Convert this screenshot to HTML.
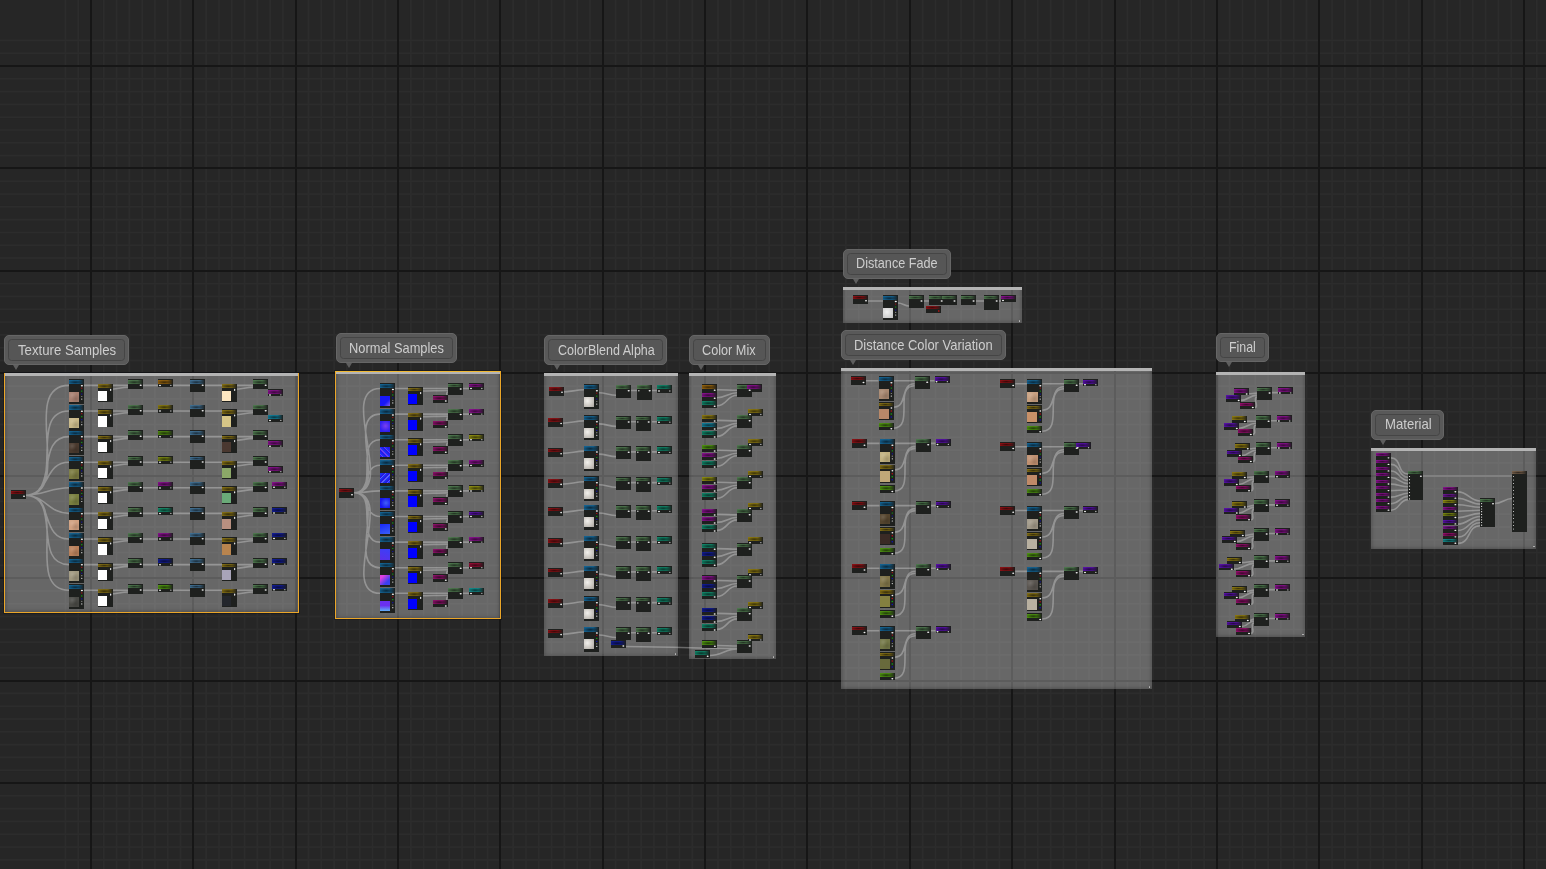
<!DOCTYPE html><html><head><meta charset="utf-8"><style>

*{margin:0;padding:0}
html,body{width:1546px;height:869px;overflow:hidden;background:#262626}
body{position:relative;font-family:"Liberation Sans",sans-serif}
.bo{position:absolute;background:#595959;border:1px solid #666;box-sizing:border-box;border-radius:5px}
.bi{position:absolute;background:#565656;border:1px solid #454545;box-sizing:border-box;border-radius:3.5px}
.bp{position:absolute;width:0;height:0;border-left:3.5px solid transparent;border-right:3.5px solid transparent;border-top:5.5px solid #5e5e5e}
.bt{position:absolute;color:#cdcdcd;filter:grayscale(1);line-height:normal;white-space:nowrap;transform-origin:0 0}
.gb{position:absolute;background:rgba(255,255,255,.3);box-sizing:border-box;box-shadow:inset 0 -3px 3px -1px rgba(0,0,0,.12),inset 3px 0 3px -1px rgba(0,0,0,.12),inset -3px 0 3px -1px rgba(0,0,0,.12)}
.gb b{position:absolute;left:0;top:0;right:0;height:3px;background:#b4b4b4}
.gb s{position:absolute;right:1.5px;bottom:1.5px;width:1.6px;height:1.6px;border-radius:50%;background:#bbb}
.gb.sel s{display:none}
.gb.sel{outline:1px solid rgba(15,18,24,.45);border:1px solid #eba628;border-top:0}
.gb.st{border-top:1px solid #f0b830}
.gb.st b{height:2px}
.n{position:absolute;background:#1e201e;overflow:hidden}
.n i{position:absolute;left:0;top:.5px;right:0;background:linear-gradient(rgba(0,0,0,.15),rgba(0,0,0,.15)),radial-gradient(ellipse 52% 50% at 42% 55%,rgba(0,0,0,.6),rgba(0,0,0,0)),linear-gradient(90deg,var(--c) 0%,var(--c) 60%,#1e201e 100%)}
.n u{position:absolute}
.n .p{background:#f2f2f2;border-radius:50%}

</style></head><body>
<svg width="1546" height="869" style="position:absolute;left:0;top:0"><rect width="1546" height="869" fill="#262626"/><rect x="64.51" y="0" width="1.8" height="869" fill="#2c2c2c"/><rect x="77.31" y="0" width="1.8" height="869" fill="#2c2c2c"/><rect x="102.89" y="0" width="1.8" height="869" fill="#2c2c2c"/><rect x="115.69" y="0" width="1.8" height="869" fill="#2c2c2c"/><rect x="128.48" y="0" width="1.8" height="869" fill="#2c2c2c"/><rect x="141.28" y="0" width="1.8" height="869" fill="#2c2c2c"/><rect x="154.07" y="0" width="1.8" height="869" fill="#2c2c2c"/><rect x="166.87" y="0" width="1.8" height="869" fill="#2c2c2c"/><rect x="179.66" y="0" width="1.8" height="869" fill="#2c2c2c"/><rect x="205.25" y="0" width="1.8" height="869" fill="#2c2c2c"/><rect x="218.05" y="0" width="1.8" height="869" fill="#2c2c2c"/><rect x="230.84" y="0" width="1.8" height="869" fill="#2c2c2c"/><rect x="243.64" y="0" width="1.8" height="869" fill="#2c2c2c"/><rect x="256.43" y="0" width="1.8" height="869" fill="#2c2c2c"/><rect x="269.22" y="0" width="1.8" height="869" fill="#2c2c2c"/><rect x="282.02" y="0" width="1.8" height="869" fill="#2c2c2c"/><rect x="307.61" y="0" width="1.8" height="869" fill="#2c2c2c"/><rect x="320.40" y="0" width="1.8" height="869" fill="#2c2c2c"/><rect x="333.20" y="0" width="1.8" height="869" fill="#2c2c2c"/><rect x="345.99" y="0" width="1.8" height="869" fill="#2c2c2c"/><rect x="358.79" y="0" width="1.8" height="869" fill="#2c2c2c"/><rect x="371.58" y="0" width="1.8" height="869" fill="#2c2c2c"/><rect x="384.38" y="0" width="1.8" height="869" fill="#2c2c2c"/><rect x="409.97" y="0" width="1.8" height="869" fill="#2c2c2c"/><rect x="422.76" y="0" width="1.8" height="869" fill="#2c2c2c"/><rect x="435.55" y="0" width="1.8" height="869" fill="#2c2c2c"/><rect x="448.35" y="0" width="1.8" height="869" fill="#2c2c2c"/><rect x="461.14" y="0" width="1.8" height="869" fill="#2c2c2c"/><rect x="473.94" y="0" width="1.8" height="869" fill="#2c2c2c"/><rect x="486.73" y="0" width="1.8" height="869" fill="#2c2c2c"/><rect x="512.32" y="0" width="1.8" height="869" fill="#2c2c2c"/><rect x="525.12" y="0" width="1.8" height="869" fill="#2c2c2c"/><rect x="537.91" y="0" width="1.8" height="869" fill="#2c2c2c"/><rect x="550.71" y="0" width="1.8" height="869" fill="#2c2c2c"/><rect x="563.50" y="0" width="1.8" height="869" fill="#2c2c2c"/><rect x="576.30" y="0" width="1.8" height="869" fill="#2c2c2c"/><rect x="589.09" y="0" width="1.8" height="869" fill="#2c2c2c"/><rect x="614.68" y="0" width="1.8" height="869" fill="#2c2c2c"/><rect x="627.47" y="0" width="1.8" height="869" fill="#2c2c2c"/><rect x="640.27" y="0" width="1.8" height="869" fill="#2c2c2c"/><rect x="653.06" y="0" width="1.8" height="869" fill="#2c2c2c"/><rect x="665.86" y="0" width="1.8" height="869" fill="#2c2c2c"/><rect x="678.65" y="0" width="1.8" height="869" fill="#2c2c2c"/><rect x="691.45" y="0" width="1.8" height="869" fill="#2c2c2c"/><rect x="717.04" y="0" width="1.8" height="869" fill="#2c2c2c"/><rect x="729.83" y="0" width="1.8" height="869" fill="#2c2c2c"/><rect x="742.63" y="0" width="1.8" height="869" fill="#2c2c2c"/><rect x="755.42" y="0" width="1.8" height="869" fill="#2c2c2c"/><rect x="768.22" y="0" width="1.8" height="869" fill="#2c2c2c"/><rect x="781.01" y="0" width="1.8" height="869" fill="#2c2c2c"/><rect x="793.80" y="0" width="1.8" height="869" fill="#2c2c2c"/><rect x="819.39" y="0" width="1.8" height="869" fill="#2c2c2c"/><rect x="832.19" y="0" width="1.8" height="869" fill="#2c2c2c"/><rect x="844.98" y="0" width="1.8" height="869" fill="#2c2c2c"/><rect x="857.78" y="0" width="1.8" height="869" fill="#2c2c2c"/><rect x="870.57" y="0" width="1.8" height="869" fill="#2c2c2c"/><rect x="883.37" y="0" width="1.8" height="869" fill="#2c2c2c"/><rect x="896.16" y="0" width="1.8" height="869" fill="#2c2c2c"/><rect x="921.75" y="0" width="1.8" height="869" fill="#2c2c2c"/><rect x="934.55" y="0" width="1.8" height="869" fill="#2c2c2c"/><rect x="947.34" y="0" width="1.8" height="869" fill="#2c2c2c"/><rect x="960.13" y="0" width="1.8" height="869" fill="#2c2c2c"/><rect x="972.93" y="0" width="1.8" height="869" fill="#2c2c2c"/><rect x="985.72" y="0" width="1.8" height="869" fill="#2c2c2c"/><rect x="998.52" y="0" width="1.8" height="869" fill="#2c2c2c"/><rect x="1024.11" y="0" width="1.8" height="869" fill="#2c2c2c"/><rect x="1036.90" y="0" width="1.8" height="869" fill="#2c2c2c"/><rect x="1049.70" y="0" width="1.8" height="869" fill="#2c2c2c"/><rect x="1062.49" y="0" width="1.8" height="869" fill="#2c2c2c"/><rect x="1075.29" y="0" width="1.8" height="869" fill="#2c2c2c"/><rect x="1088.08" y="0" width="1.8" height="869" fill="#2c2c2c"/><rect x="1100.88" y="0" width="1.8" height="869" fill="#2c2c2c"/><rect x="1126.46" y="0" width="1.8" height="869" fill="#2c2c2c"/><rect x="1139.26" y="0" width="1.8" height="869" fill="#2c2c2c"/><rect x="1152.05" y="0" width="1.8" height="869" fill="#2c2c2c"/><rect x="1164.85" y="0" width="1.8" height="869" fill="#2c2c2c"/><rect x="1177.64" y="0" width="1.8" height="869" fill="#2c2c2c"/><rect x="1190.44" y="0" width="1.8" height="869" fill="#2c2c2c"/><rect x="1203.23" y="0" width="1.8" height="869" fill="#2c2c2c"/><rect x="1228.82" y="0" width="1.8" height="869" fill="#2c2c2c"/><rect x="1241.62" y="0" width="1.8" height="869" fill="#2c2c2c"/><rect x="1254.41" y="0" width="1.8" height="869" fill="#2c2c2c"/><rect x="1267.21" y="0" width="1.8" height="869" fill="#2c2c2c"/><rect x="1280.00" y="0" width="1.8" height="869" fill="#2c2c2c"/><rect x="1292.79" y="0" width="1.8" height="869" fill="#2c2c2c"/><rect x="1305.59" y="0" width="1.8" height="869" fill="#2c2c2c"/><rect x="1331.18" y="0" width="1.8" height="869" fill="#2c2c2c"/><rect x="1343.97" y="0" width="1.8" height="869" fill="#2c2c2c"/><rect x="1356.77" y="0" width="1.8" height="869" fill="#2c2c2c"/><rect x="1369.56" y="0" width="1.8" height="869" fill="#2c2c2c"/><rect x="1382.36" y="0" width="1.8" height="869" fill="#2c2c2c"/><rect x="1395.15" y="0" width="1.8" height="869" fill="#2c2c2c"/><rect x="1407.95" y="0" width="1.8" height="869" fill="#2c2c2c"/><rect x="1433.54" y="0" width="1.8" height="869" fill="#2c2c2c"/><rect x="1446.33" y="0" width="1.8" height="869" fill="#2c2c2c"/><rect x="1459.12" y="0" width="1.8" height="869" fill="#2c2c2c"/><rect x="1471.92" y="0" width="1.8" height="869" fill="#2c2c2c"/><rect x="1484.71" y="0" width="1.8" height="869" fill="#2c2c2c"/><rect x="1497.51" y="0" width="1.8" height="869" fill="#2c2c2c"/><rect x="1510.30" y="0" width="1.8" height="869" fill="#2c2c2c"/><rect x="1535.89" y="0" width="1.8" height="869" fill="#2c2c2c"/><rect x="0" y="39.49" width="1546" height="1.8" fill="#2c2c2c"/><rect x="0" y="52.30" width="1546" height="1.8" fill="#2c2c2c"/><rect x="0" y="77.90" width="1546" height="1.8" fill="#2c2c2c"/><rect x="0" y="90.71" width="1546" height="1.8" fill="#2c2c2c"/><rect x="0" y="103.51" width="1546" height="1.8" fill="#2c2c2c"/><rect x="0" y="116.31" width="1546" height="1.8" fill="#2c2c2c"/><rect x="0" y="129.12" width="1546" height="1.8" fill="#2c2c2c"/><rect x="0" y="141.92" width="1546" height="1.8" fill="#2c2c2c"/><rect x="0" y="154.73" width="1546" height="1.8" fill="#2c2c2c"/><rect x="0" y="180.33" width="1546" height="1.8" fill="#2c2c2c"/><rect x="0" y="193.14" width="1546" height="1.8" fill="#2c2c2c"/><rect x="0" y="205.94" width="1546" height="1.8" fill="#2c2c2c"/><rect x="0" y="218.75" width="1546" height="1.8" fill="#2c2c2c"/><rect x="0" y="231.55" width="1546" height="1.8" fill="#2c2c2c"/><rect x="0" y="244.35" width="1546" height="1.8" fill="#2c2c2c"/><rect x="0" y="257.16" width="1546" height="1.8" fill="#2c2c2c"/><rect x="0" y="282.76" width="1546" height="1.8" fill="#2c2c2c"/><rect x="0" y="295.57" width="1546" height="1.8" fill="#2c2c2c"/><rect x="0" y="308.37" width="1546" height="1.8" fill="#2c2c2c"/><rect x="0" y="321.18" width="1546" height="1.8" fill="#2c2c2c"/><rect x="0" y="333.98" width="1546" height="1.8" fill="#2c2c2c"/><rect x="0" y="346.78" width="1546" height="1.8" fill="#2c2c2c"/><rect x="0" y="359.59" width="1546" height="1.8" fill="#2c2c2c"/><rect x="0" y="385.19" width="1546" height="1.8" fill="#2c2c2c"/><rect x="0" y="398.00" width="1546" height="1.8" fill="#2c2c2c"/><rect x="0" y="410.80" width="1546" height="1.8" fill="#2c2c2c"/><rect x="0" y="423.61" width="1546" height="1.8" fill="#2c2c2c"/><rect x="0" y="436.41" width="1546" height="1.8" fill="#2c2c2c"/><rect x="0" y="449.21" width="1546" height="1.8" fill="#2c2c2c"/><rect x="0" y="462.02" width="1546" height="1.8" fill="#2c2c2c"/><rect x="0" y="487.62" width="1546" height="1.8" fill="#2c2c2c"/><rect x="0" y="500.43" width="1546" height="1.8" fill="#2c2c2c"/><rect x="0" y="513.23" width="1546" height="1.8" fill="#2c2c2c"/><rect x="0" y="526.04" width="1546" height="1.8" fill="#2c2c2c"/><rect x="0" y="538.84" width="1546" height="1.8" fill="#2c2c2c"/><rect x="0" y="551.64" width="1546" height="1.8" fill="#2c2c2c"/><rect x="0" y="564.45" width="1546" height="1.8" fill="#2c2c2c"/><rect x="0" y="590.05" width="1546" height="1.8" fill="#2c2c2c"/><rect x="0" y="602.86" width="1546" height="1.8" fill="#2c2c2c"/><rect x="0" y="615.66" width="1546" height="1.8" fill="#2c2c2c"/><rect x="0" y="628.47" width="1546" height="1.8" fill="#2c2c2c"/><rect x="0" y="641.27" width="1546" height="1.8" fill="#2c2c2c"/><rect x="0" y="654.07" width="1546" height="1.8" fill="#2c2c2c"/><rect x="0" y="666.88" width="1546" height="1.8" fill="#2c2c2c"/><rect x="0" y="692.48" width="1546" height="1.8" fill="#2c2c2c"/><rect x="0" y="705.29" width="1546" height="1.8" fill="#2c2c2c"/><rect x="0" y="718.09" width="1546" height="1.8" fill="#2c2c2c"/><rect x="0" y="730.90" width="1546" height="1.8" fill="#2c2c2c"/><rect x="0" y="743.70" width="1546" height="1.8" fill="#2c2c2c"/><rect x="0" y="756.50" width="1546" height="1.8" fill="#2c2c2c"/><rect x="0" y="769.31" width="1546" height="1.8" fill="#2c2c2c"/><rect x="0" y="794.91" width="1546" height="1.8" fill="#2c2c2c"/><rect x="0" y="807.72" width="1546" height="1.8" fill="#2c2c2c"/><rect x="0" y="820.52" width="1546" height="1.8" fill="#2c2c2c"/><rect x="0" y="833.33" width="1546" height="1.8" fill="#2c2c2c"/><rect x="0" y="846.13" width="1546" height="1.8" fill="#2c2c2c"/><rect x="0" y="858.93" width="1546" height="1.8" fill="#2c2c2c"/><rect x="90" y="0" width="2" height="869" fill="#161616"/><rect x="192" y="0" width="2" height="869" fill="#161616"/><rect x="295" y="0" width="2" height="869" fill="#161616"/><rect x="397" y="0" width="2" height="869" fill="#161616"/><rect x="499" y="0" width="2" height="869" fill="#161616"/><rect x="602" y="0" width="2" height="869" fill="#161616"/><rect x="704" y="0" width="2" height="869" fill="#161616"/><rect x="806" y="0" width="2" height="869" fill="#161616"/><rect x="909" y="0" width="2" height="869" fill="#161616"/><rect x="1011" y="0" width="2" height="869" fill="#161616"/><rect x="1114" y="0" width="2" height="869" fill="#161616"/><rect x="1216" y="0" width="2" height="869" fill="#161616"/><rect x="1318" y="0" width="2" height="869" fill="#161616"/><rect x="1421" y="0" width="2" height="869" fill="#161616"/><rect x="1523" y="0" width="2" height="869" fill="#161616"/><rect x="0" y="65" width="1546" height="2" fill="#161616"/><rect x="0" y="167" width="1546" height="2" fill="#161616"/><rect x="0" y="270" width="1546" height="2" fill="#161616"/><rect x="0" y="372" width="1546" height="2" fill="#161616"/><rect x="0" y="475" width="1546" height="2" fill="#161616"/><rect x="0" y="577" width="1546" height="2" fill="#161616"/><rect x="0" y="680" width="1546" height="2" fill="#161616"/><rect x="0" y="782" width="1546" height="2" fill="#161616"/></svg>
<div class="bo" style="left:4.0px;top:335.0px;width:125.0px;height:30.0px"></div>
<div class="bi" style="left:8.0px;top:339.0px;width:117.0px;height:22.0px"></div>
<div class="bp" style="left:13.0px;top:365.0px"></div>
<div class="bt" style="left:18.00px;top:341.54px;font-size:14.1px;transform:scaleX(0.9353)">Texture Samples</div>
<div class="gb sel" style="left:4.0px;top:373.0px;width:295.0px;height:240.0px"><b></b><s></s></div>
<div class="bo" style="left:336.0px;top:333.0px;width:121.0px;height:30.0px"></div>
<div class="bi" style="left:340.0px;top:337.0px;width:113.0px;height:22.0px"></div>
<div class="bp" style="left:345.5px;top:363.0px"></div>
<div class="bt" style="left:349.00px;top:339.54px;font-size:14.1px;transform:scaleX(0.9111)">Normal Samples</div>
<div class="gb sel st" style="left:335.0px;top:371.0px;width:166.0px;height:248.0px"><b></b><s></s></div>
<div class="bo" style="left:544.2px;top:335.3px;width:122.4px;height:29.5px"></div>
<div class="bi" style="left:548.2px;top:339.3px;width:114.4px;height:21.5px"></div>
<div class="bp" style="left:553.6px;top:364.8px"></div>
<div class="bt" style="left:557.50px;top:341.74px;font-size:14.1px;transform:scaleX(0.8887)">ColorBlend Alpha</div>
<div class="gb" style="left:544.2px;top:373.0px;width:133.8px;height:283.0px"><b></b><s></s></div>
<div class="bo" style="left:689.1px;top:335.3px;width:80.6px;height:29.5px"></div>
<div class="bi" style="left:693.1px;top:339.3px;width:72.6px;height:21.5px"></div>
<div class="bp" style="left:698.0px;top:364.8px"></div>
<div class="bt" style="left:702.30px;top:341.74px;font-size:14.1px;transform:scaleX(0.8998)">Color Mix</div>
<div class="gb" style="left:689.3px;top:373.0px;width:86.7px;height:286.0px"><b></b><s></s></div>
<div class="bo" style="left:843.1px;top:249.2px;width:107.6px;height:29.5px"></div>
<div class="bi" style="left:847.1px;top:253.2px;width:99.6px;height:21.5px"></div>
<div class="bp" style="left:852.7px;top:278.7px"></div>
<div class="bt" style="left:856.40px;top:255.44px;font-size:14.1px;transform:scaleX(0.8986)">Distance Fade</div>
<div class="gb" style="left:843.1px;top:287.0px;width:178.9px;height:36.0px"><b></b><s></s></div>
<div class="bo" style="left:841.1px;top:330.2px;width:164.7px;height:29.8px"></div>
<div class="bi" style="left:845.1px;top:334.2px;width:156.7px;height:21.8px"></div>
<div class="bp" style="left:850.3px;top:360.0px"></div>
<div class="bt" style="left:854.30px;top:336.54px;font-size:14.1px;transform:scaleX(0.9187)">Distance Color Variation</div>
<div class="gb" style="left:841.3px;top:368.2px;width:310.7px;height:321.3px"><b></b><s></s></div>
<div class="bo" style="left:1216.4px;top:333.2px;width:52.2px;height:29.2px"></div>
<div class="bi" style="left:1220.4px;top:337.2px;width:44.2px;height:21.2px"></div>
<div class="bp" style="left:1225.9px;top:362.4px"></div>
<div class="bt" style="left:1229.30px;top:339.44px;font-size:14.1px;transform:scaleX(0.8790)">Final</div>
<div class="gb" style="left:1216.0px;top:371.5px;width:89.1px;height:265.2px"><b></b><s></s></div>
<div class="bo" style="left:1371.4px;top:410.1px;width:72.6px;height:29.5px"></div>
<div class="bi" style="left:1375.4px;top:414.1px;width:64.6px;height:21.5px"></div>
<div class="bp" style="left:1380.3px;top:439.6px"></div>
<div class="bt" style="left:1384.50px;top:416.34px;font-size:14.1px;transform:scaleX(0.9327)">Material</div>
<div class="gb" style="left:1371.0px;top:448.3px;width:165.4px;height:100.5px"><b></b><s></s></div>
<svg width="1546" height="869" style="position:absolute;left:0;top:0"><path d="M25.0 495.3C76.3 495.3 17.7 385.4 69.0 385.4 M83.0 385.4C98.0 385.4 113.0 385.4 128.0 385.4 M110.0 389.2C116.7 389.2 121.3 387.2 128.0 387.2 M143.0 385.4C148.0 385.4 153.0 385.4 158.0 385.4 M173.0 385.4C178.7 385.4 184.3 385.4 190.0 385.4 M205.0 385.4C215.7 385.4 226.3 385.4 237.0 385.4 M235.0 389.2C241.7 389.2 246.3 387.2 253.0 387.2 M205.0 385.4C221.0 385.4 237.0 385.4 253.0 385.4 M25.0 495.3C67.8 495.3 26.2 411.0 69.0 411.0 M83.0 411.0C98.0 411.0 113.0 411.0 128.0 411.0 M110.0 414.8C116.7 414.8 121.3 412.8 128.0 412.8 M143.0 411.0C148.0 411.0 153.0 411.0 158.0 411.0 M173.0 411.0C178.7 411.0 184.3 411.0 190.0 411.0 M205.0 411.0C215.7 411.0 226.3 411.0 237.0 411.0 M235.0 414.8C241.7 414.8 246.3 412.8 253.0 412.8 M205.0 411.0C221.0 411.0 237.0 411.0 253.0 411.0 M25.0 495.3C59.2 495.3 34.8 436.6 69.0 436.6 M83.0 436.6C98.0 436.6 113.0 436.6 128.0 436.6 M110.0 440.4C116.7 440.4 121.3 438.4 128.0 438.4 M143.0 436.6C148.0 436.6 153.0 436.6 158.0 436.6 M173.0 436.6C178.7 436.6 184.3 436.6 190.0 436.6 M205.0 436.6C215.7 436.6 226.3 436.6 237.0 436.6 M235.0 440.4C241.7 440.4 246.3 438.4 253.0 438.4 M205.0 436.6C221.0 436.6 237.0 436.6 253.0 436.6 M25.0 495.3C50.7 495.3 43.3 462.2 69.0 462.2 M83.0 462.2C98.0 462.2 113.0 462.2 128.0 462.2 M110.0 466.0C116.7 466.0 121.3 464.0 128.0 464.0 M143.0 462.2C148.0 462.2 153.0 462.2 158.0 462.2 M173.0 462.2C178.7 462.2 184.3 462.2 190.0 462.2 M205.0 462.2C215.7 462.2 226.3 462.2 237.0 462.2 M235.0 466.0C241.7 466.0 246.3 464.0 253.0 464.0 M205.0 462.2C221.0 462.2 237.0 462.2 253.0 462.2 M25.0 495.3C42.2 495.3 51.8 487.8 69.0 487.8 M83.0 487.8C98.0 487.8 113.0 487.8 128.0 487.8 M110.0 491.6C116.7 491.6 121.3 489.6 128.0 489.6 M143.0 487.8C148.0 487.8 153.0 487.8 158.0 487.8 M173.0 487.8C178.7 487.8 184.3 487.8 190.0 487.8 M205.0 487.8C215.7 487.8 226.3 487.8 237.0 487.8 M235.0 491.6C241.7 491.6 246.3 489.6 253.0 489.6 M205.0 487.8C221.0 487.8 237.0 487.8 253.0 487.8 M25.0 495.3C45.7 495.3 48.3 513.4 69.0 513.4 M83.0 513.4C98.0 513.4 113.0 513.4 128.0 513.4 M110.0 517.2C116.7 517.2 121.3 515.2 128.0 515.2 M143.0 513.4C148.0 513.4 153.0 513.4 158.0 513.4 M173.0 513.4C178.7 513.4 184.3 513.4 190.0 513.4 M205.0 513.4C215.7 513.4 226.3 513.4 237.0 513.4 M235.0 517.2C241.7 517.2 246.3 515.2 253.0 515.2 M205.0 513.4C221.0 513.4 237.0 513.4 253.0 513.4 M25.0 495.3C54.2 495.3 39.8 539.0 69.0 539.0 M83.0 539.0C98.0 539.0 113.0 539.0 128.0 539.0 M110.0 542.8C116.7 542.8 121.3 540.8 128.0 540.8 M143.0 539.0C148.0 539.0 153.0 539.0 158.0 539.0 M173.0 539.0C178.7 539.0 184.3 539.0 190.0 539.0 M205.0 539.0C215.7 539.0 226.3 539.0 237.0 539.0 M235.0 542.8C241.7 542.8 246.3 540.8 253.0 540.8 M205.0 539.0C221.0 539.0 237.0 539.0 253.0 539.0 M25.0 495.3C62.8 495.3 31.2 564.6 69.0 564.6 M83.0 564.6C98.0 564.6 113.0 564.6 128.0 564.6 M110.0 568.4C116.7 568.4 121.3 566.4 128.0 566.4 M143.0 564.6C148.0 564.6 153.0 564.6 158.0 564.6 M173.0 564.6C178.7 564.6 184.3 564.6 190.0 564.6 M205.0 564.6C215.7 564.6 226.3 564.6 237.0 564.6 M235.0 568.4C241.7 568.4 246.3 566.4 253.0 566.4 M205.0 564.6C221.0 564.6 237.0 564.6 253.0 564.6 M25.0 495.3C71.3 495.3 22.7 590.2 69.0 590.2 M83.0 590.2C98.0 590.2 113.0 590.2 128.0 590.2 M110.0 594.0C116.7 594.0 121.3 592.0 128.0 592.0 M143.0 590.2C148.0 590.2 153.0 590.2 158.0 590.2 M173.0 590.2C178.7 590.2 184.3 590.2 190.0 590.2 M205.0 590.2C215.7 590.2 226.3 590.2 237.0 590.2 M235.0 594.0C241.7 594.0 246.3 592.0 253.0 592.0 M205.0 590.2C221.0 590.2 237.0 590.2 253.0 590.2 M354.0 492.8C397.4 492.8 336.6 388.5 380.0 388.5 M395.0 388.5C412.7 388.5 430.3 388.5 448.0 388.5 M420.0 391.0C429.5 391.0 438.5 390.5 448.0 390.5 M446.0 400.0C449.3 400.0 444.7 392.0 448.0 392.0 M463.0 388.5C465.0 388.5 467.0 388.5 469.0 388.5 M354.0 492.8C388.9 492.8 345.1 414.1 380.0 414.1 M395.0 414.1C412.7 414.1 430.3 414.1 448.0 414.1 M420.0 416.6C429.5 416.6 438.5 416.1 448.0 416.1 M446.0 425.6C449.3 425.6 444.7 417.6 448.0 417.6 M463.0 414.1C465.0 414.1 467.0 414.1 469.0 414.1 M354.0 492.8C380.4 492.8 353.6 439.7 380.0 439.7 M395.0 439.7C412.7 439.7 430.3 439.7 448.0 439.7 M420.0 442.2C429.5 442.2 438.5 441.7 448.0 441.7 M446.0 451.2C449.3 451.2 444.7 443.2 448.0 443.2 M463.0 439.7C465.0 439.7 467.0 439.7 469.0 439.7 M354.0 492.8C371.8 492.8 362.2 465.3 380.0 465.3 M395.0 465.3C412.7 465.3 430.3 465.3 448.0 465.3 M420.0 467.8C429.5 467.8 438.5 467.3 448.0 467.3 M446.0 476.8C449.3 476.8 444.7 468.8 448.0 468.8 M463.0 465.3C465.0 465.3 467.0 465.3 469.0 465.3 M354.0 492.8C363.3 492.8 370.7 490.9 380.0 490.9 M395.0 490.9C412.7 490.9 430.3 490.9 448.0 490.9 M420.0 493.4C429.5 493.4 438.5 492.9 448.0 492.9 M446.0 502.4C449.3 502.4 444.7 494.4 448.0 494.4 M463.0 490.9C465.0 490.9 467.0 490.9 469.0 490.9 M354.0 492.8C370.6 492.8 363.4 516.5 380.0 516.5 M395.0 516.5C412.7 516.5 430.3 516.5 448.0 516.5 M420.0 519.0C429.5 519.0 438.5 518.5 448.0 518.5 M446.0 528.0C449.3 528.0 444.7 520.0 448.0 520.0 M463.0 516.5C465.0 516.5 467.0 516.5 469.0 516.5 M354.0 492.8C379.1 492.8 354.9 542.1 380.0 542.1 M395.0 542.1C412.7 542.1 430.3 542.1 448.0 542.1 M420.0 544.6C429.5 544.6 438.5 544.1 448.0 544.1 M446.0 553.6C449.3 553.6 444.7 545.6 448.0 545.6 M463.0 542.1C465.0 542.1 467.0 542.1 469.0 542.1 M354.0 492.8C387.6 492.8 346.4 567.7 380.0 567.7 M395.0 567.7C412.7 567.7 430.3 567.7 448.0 567.7 M420.0 570.2C429.5 570.2 438.5 569.7 448.0 569.7 M446.0 579.2C449.3 579.2 444.7 571.2 448.0 571.2 M463.0 567.7C465.0 567.7 467.0 567.7 469.0 567.7 M354.0 492.8C396.2 492.8 337.8 593.3 380.0 593.3 M395.0 593.3C412.7 593.3 430.3 593.3 448.0 593.3 M420.0 595.8C429.5 595.8 438.5 595.3 448.0 595.3 M446.0 604.8C449.3 604.8 444.7 596.8 448.0 596.8 M463.0 593.3C465.0 593.3 467.0 593.3 469.0 593.3 M562.5 392.0C570.4 392.0 576.1 389.7 584.0 389.7 M599.0 392.7C605.5 392.7 609.5 395.2 616.0 395.2 M631.0 390.5C633.0 390.5 635.0 390.5 637.0 390.5 M652.0 390.5C654.0 390.5 655.0 390.5 657.0 390.5 M562.5 423.2C570.4 423.2 576.1 420.9 584.0 420.9 M599.0 423.9C605.5 423.9 609.5 426.4 616.0 426.4 M631.0 421.7C633.0 421.7 635.0 421.7 637.0 421.7 M652.0 421.7C654.0 421.7 655.0 421.7 657.0 421.7 M562.5 453.4C570.4 453.4 576.1 451.1 584.0 451.1 M599.0 454.1C605.5 454.1 609.5 456.6 616.0 456.6 M631.0 451.9C633.0 451.9 635.0 451.9 637.0 451.9 M652.0 451.9C654.0 451.9 655.0 451.9 657.0 451.9 M562.5 484.1C570.4 484.1 576.1 481.8 584.0 481.8 M599.0 484.8C605.5 484.8 609.5 487.3 616.0 487.3 M631.0 482.6C633.0 482.6 635.0 482.6 637.0 482.6 M652.0 482.6C654.0 482.6 655.0 482.6 657.0 482.6 M562.5 512.3C570.4 512.3 576.1 510.0 584.0 510.0 M599.0 513.0C605.5 513.0 609.5 515.5 616.0 515.5 M631.0 510.8C633.0 510.8 635.0 510.8 637.0 510.8 M652.0 510.8C654.0 510.8 655.0 510.8 657.0 510.8 M562.5 543.5C570.4 543.5 576.1 541.2 584.0 541.2 M599.0 544.2C605.5 544.2 609.5 546.7 616.0 546.7 M631.0 542.0C633.0 542.0 635.0 542.0 637.0 542.0 M652.0 542.0C654.0 542.0 655.0 542.0 657.0 542.0 M562.5 573.4C570.4 573.4 576.1 571.1 584.0 571.1 M599.0 574.1C605.5 574.1 609.5 576.6 616.0 576.6 M631.0 571.9C633.0 571.9 635.0 571.9 637.0 571.9 M652.0 571.9C654.0 571.9 655.0 571.9 657.0 571.9 M562.5 604.1C570.4 604.1 576.1 601.8 584.0 601.8 M599.0 604.8C605.5 604.8 609.5 607.3 616.0 607.3 M631.0 602.6C633.0 602.6 635.0 602.6 637.0 602.6 M652.0 602.6C654.0 602.6 655.0 602.6 657.0 602.6 M562.5 634.3C570.4 634.3 576.1 632.0 584.0 632.0 M599.0 635.0C605.5 635.0 609.5 637.5 616.0 637.5 M631.0 632.8C633.0 632.8 635.0 632.8 637.0 632.8 M652.0 632.8C654.0 632.8 655.0 632.8 657.0 632.8 M625.6 646.5C663.4 646.5 699.2 648.5 737.0 648.5 M717.0 389.7C723.8 389.7 730.2 390.2 737.0 390.2 M717.0 397.7C725.3 397.7 728.7 392.7 737.0 392.7 M717.0 405.7C727.2 405.7 726.8 395.2 737.0 395.2 M717.0 420.4C723.8 420.4 730.2 420.9 737.0 420.9 M717.0 428.4C725.3 428.4 728.7 423.4 737.0 423.4 M717.0 436.4C727.2 436.4 726.8 425.9 737.0 425.9 M717.0 450.3C723.8 450.3 730.2 450.8 737.0 450.8 M717.0 458.3C725.3 458.3 728.7 453.3 737.0 453.3 M717.0 466.3C727.2 466.3 726.8 455.8 737.0 455.8 M717.0 482.3C723.8 482.3 730.2 482.8 737.0 482.8 M717.0 490.3C725.3 490.3 728.7 485.3 737.0 485.3 M717.0 498.3C727.2 498.3 726.8 487.8 737.0 487.8 M717.0 514.4C723.8 514.4 730.2 514.9 737.0 514.9 M717.0 522.4C725.3 522.4 728.7 517.4 737.0 517.4 M717.0 530.4C727.2 530.4 726.8 519.9 737.0 519.9 M717.0 548.6C723.8 548.6 730.2 549.1 737.0 549.1 M717.0 556.6C725.3 556.6 728.7 551.6 737.0 551.6 M717.0 564.6C727.2 564.6 726.8 554.1 737.0 554.1 M717.0 580.5C723.8 580.5 730.2 581.0 737.0 581.0 M717.0 588.5C725.3 588.5 728.7 583.5 737.0 583.5 M717.0 596.5C727.2 596.5 726.8 586.0 737.0 586.0 M717.0 613.4C723.8 613.4 730.2 613.9 737.0 613.9 M717.0 621.4C725.3 621.4 728.7 616.4 737.0 616.4 M717.0 629.4C727.2 629.4 726.8 618.9 737.0 618.9 M717.0 645.5C723.8 645.5 730.2 646.0 737.0 646.0 M710.0 655.5C721.2 655.5 725.8 649.0 737.0 649.0 M868.0 301.0C873.0 301.0 878.0 301.0 883.0 301.0 M898.0 303.0C902.7 303.0 904.3 306.0 909.0 306.0 M924.0 301.0C926.0 301.0 927.0 301.0 929.0 301.0 M976.0 301.0C978.7 301.0 981.3 301.0 984.0 301.0 M999.0 301.0C1001.0 301.0 999.0 301.0 1001.0 301.0 M865.5 380.7C869.8 380.7 874.2 380.7 878.5 380.7 M893.5 380.7C900.5 380.7 907.5 380.7 914.5 380.7 M893.5 407.2C908.3 407.2 899.7 383.7 914.5 383.7 M893.5 428.2C914.7 428.2 893.3 385.7 914.5 385.7 M929.5 380.7C931.5 380.7 932.5 380.7 934.5 380.7 M866.5 443.4C870.8 443.4 875.2 443.4 879.5 443.4 M894.5 443.4C901.5 443.4 908.5 443.4 915.5 443.4 M894.5 469.9C909.3 469.9 900.7 446.4 915.5 446.4 M894.5 490.9C915.7 490.9 894.3 448.4 915.5 448.4 M930.5 443.4C932.5 443.4 933.5 443.4 935.5 443.4 M866.5 505.6C870.8 505.6 875.2 505.6 879.5 505.6 M894.5 505.6C901.5 505.6 908.5 505.6 915.5 505.6 M894.5 532.1C909.3 532.1 900.7 508.6 915.5 508.6 M894.5 553.1C915.7 553.1 894.3 510.6 915.5 510.6 M930.5 505.6C932.5 505.6 933.5 505.6 935.5 505.6 M866.5 568.2C870.8 568.2 875.2 568.2 879.5 568.2 M894.5 568.2C901.5 568.2 908.5 568.2 915.5 568.2 M894.5 594.7C909.3 594.7 900.7 571.2 915.5 571.2 M894.5 615.7C915.7 615.7 894.3 573.2 915.5 573.2 M930.5 568.2C932.5 568.2 933.5 568.2 935.5 568.2 M866.5 630.7C870.8 630.7 875.2 630.7 879.5 630.7 M894.5 630.7C901.5 630.7 908.5 630.7 915.5 630.7 M894.5 657.2C909.3 657.2 900.7 633.7 915.5 633.7 M894.5 678.2C915.7 678.2 894.3 635.7 915.5 635.7 M930.5 630.7C932.5 630.7 933.5 630.7 935.5 630.7 M1015.2 383.7C1019.3 383.7 1023.3 383.7 1027.4 383.7 M1042.4 383.7C1049.6 383.7 1056.8 383.7 1064.0 383.7 M1042.4 410.2C1057.4 410.2 1049.0 386.7 1064.0 386.7 M1042.4 431.2C1063.8 431.2 1042.6 388.7 1064.0 388.7 M1079.0 383.7C1081.0 383.7 1081.0 383.7 1083.0 383.7 M1015.2 446.7C1019.3 446.7 1023.3 446.7 1027.4 446.7 M1042.4 446.7C1049.6 446.7 1056.8 446.7 1064.0 446.7 M1042.4 473.2C1057.4 473.2 1049.0 449.7 1064.0 449.7 M1042.4 494.2C1063.8 494.2 1042.6 451.7 1064.0 451.7 M1079.0 446.7C1081.0 446.7 1073.7 446.7 1075.7 446.7 M1015.2 510.5C1019.3 510.5 1023.3 510.5 1027.4 510.5 M1042.4 510.5C1049.6 510.5 1056.8 510.5 1064.0 510.5 M1042.4 537.0C1057.4 537.0 1049.0 513.5 1064.0 513.5 M1042.4 558.0C1063.8 558.0 1042.6 515.5 1064.0 515.5 M1079.0 510.5C1081.0 510.5 1081.0 510.5 1083.0 510.5 M1015.2 571.4C1019.3 571.4 1023.3 571.4 1027.4 571.4 M1042.4 571.4C1049.6 571.4 1056.8 571.4 1064.0 571.4 M1042.4 597.9C1057.4 597.9 1049.0 574.4 1064.0 574.4 M1042.4 618.9C1063.8 618.9 1042.6 576.4 1064.0 576.4 M1079.0 571.4C1081.0 571.4 1081.0 571.4 1083.0 571.4 M1248.9 393.8C1251.8 393.8 1254.0 393.1 1256.9 393.1 M1240.9 400.4C1248.0 400.4 1249.8 395.1 1256.9 395.1 M1255.0 407.5C1259.1 407.5 1252.8 397.1 1256.9 397.1 M1271.9 392.6C1273.9 392.6 1275.9 392.6 1277.9 392.6 M1247.0 421.3C1250.0 421.3 1252.9 421.2 1255.9 421.2 M1239.0 428.3C1246.3 428.3 1248.6 423.2 1255.9 423.2 M1253.0 434.4C1257.0 434.4 1251.9 425.2 1255.9 425.2 M1270.9 420.7C1272.9 420.7 1274.9 420.7 1276.9 420.7 M1250.0 448.7C1252.1 448.7 1253.8 448.2 1255.9 448.2 M1242.0 455.5C1248.4 455.5 1249.5 450.2 1255.9 450.2 M1253.0 461.5C1257.1 461.5 1251.8 452.2 1255.9 452.2 M1270.9 447.7C1272.9 447.7 1274.9 447.7 1276.9 447.7 M1247.0 477.3C1249.5 477.3 1251.5 476.9 1254.0 476.9 M1239.0 484.4C1245.8 484.4 1247.2 478.9 1254.0 478.9 M1251.2 490.6C1255.4 490.6 1249.8 480.9 1254.0 480.9 M1269.0 476.4C1271.0 476.4 1273.0 476.4 1275.0 476.4 M1247.0 506.8C1249.8 506.8 1251.2 505.4 1254.0 505.4 M1239.0 513.0C1245.9 513.0 1247.1 507.4 1254.0 507.4 M1251.2 519.7C1255.6 519.7 1249.6 509.4 1254.0 509.4 M1269.0 504.9C1271.0 504.9 1273.0 504.9 1275.0 504.9 M1245.0 535.5C1248.5 535.5 1250.5 534.0 1254.0 534.0 M1237.0 541.5C1244.5 541.5 1246.5 536.0 1254.0 536.0 M1251.2 548.5C1255.6 548.5 1249.6 538.0 1254.0 538.0 M1269.0 533.5C1271.0 533.5 1273.0 533.5 1275.0 533.5 M1242.0 562.5C1246.4 562.5 1249.6 561.4 1254.0 561.4 M1234.0 569.1C1242.6 569.1 1245.4 563.4 1254.0 563.4 M1251.2 575.7C1255.6 575.7 1249.6 565.4 1254.0 565.4 M1269.0 560.9C1271.0 560.9 1273.0 560.9 1275.0 560.9 M1247.0 591.5C1249.8 591.5 1251.2 590.1 1254.0 590.1 M1239.0 597.5C1245.8 597.5 1247.2 592.1 1254.0 592.1 M1251.2 604.2C1255.5 604.2 1249.7 594.1 1254.0 594.1 M1269.0 589.6C1271.0 589.6 1273.0 589.6 1275.0 589.6 M1250.0 620.4C1252.0 620.4 1252.0 619.0 1254.0 619.0 M1242.0 626.5C1247.8 626.5 1248.2 621.0 1254.0 621.0 M1251.2 633.3C1255.6 633.3 1249.6 623.0 1254.0 623.0 M1269.0 618.5C1271.0 618.5 1273.0 618.5 1275.0 618.5 M1391.0 457.9C1402.0 457.9 1397.0 474.0 1408.0 474.0 M1391.0 464.4C1400.9 464.4 1398.1 477.2 1408.0 477.2 M1391.0 471.0C1399.8 471.0 1399.2 480.4 1408.0 480.4 M1391.0 477.5C1398.7 477.5 1400.3 483.6 1408.0 483.6 M1391.0 484.1C1397.6 484.1 1401.4 486.8 1408.0 486.8 M1391.0 490.6C1396.9 490.6 1402.1 490.0 1408.0 490.0 M1391.0 497.1C1398.0 497.1 1401.0 493.2 1408.0 493.2 M1391.0 503.7C1399.1 503.7 1399.9 496.4 1408.0 496.4 M1391.0 510.2C1400.2 510.2 1398.8 499.6 1408.0 499.6 M1458.0 491.9C1468.4 491.9 1469.6 501.0 1480.0 501.0 M1458.0 498.3C1467.3 498.3 1470.7 504.1 1480.0 504.1 M1458.0 504.8C1466.1 504.8 1471.9 507.2 1480.0 507.2 M1458.0 511.2C1465.6 511.2 1472.4 510.3 1480.0 510.3 M1458.0 517.7C1466.8 517.7 1471.2 513.4 1480.0 513.4 M1458.0 524.1C1467.9 524.1 1470.1 516.5 1480.0 516.5 M1458.0 530.5C1469.0 530.5 1469.0 519.6 1480.0 519.6 M1458.0 537.0C1470.1 537.0 1467.9 522.7 1480.0 522.7 M1458.0 543.4C1471.2 543.4 1466.8 525.8 1480.0 525.8 M1423.0 476.0C1452.7 476.0 1482.3 476.0 1512.0 476.0 M1495.0 503.5C1502.3 503.5 1504.7 498.5 1512.0 498.5" fill="none" stroke="rgba(235,235,235,.34)" stroke-width="1.6"/></svg>
<div class="n" style="left:69.0px;top:379.2px;width:15.0px;height:25.0px"><i style="height:4.5px;--c:#1872a8"></i><u style="left:0.0px;top:12.8px;width:10.2px;height:10.2px;background:radial-gradient(circle at 30% 30%,rgba(255,255,255,.14),rgba(255,255,255,0) 45%),radial-gradient(circle at 70% 70%,rgba(0,0,0,.16),rgba(0,0,0,0) 50%),#a88070"></u></div>
<div class="n" style="left:98.0px;top:383.8px;width:15.0px;height:18.0px"><i style="height:3.9px;--c:#988018"></i><u style="left:0.0px;top:7.0px;width:9.2px;height:10.2px;background:#ffffff"></u></div>
<div class="n" style="left:128.0px;top:379.2px;width:15.0px;height:10.0px"><i style="height:3.9px;--c:#5a8a5a"></i></div>
<div class="n" style="left:158.0px;top:379.2px;width:15.0px;height:8.0px"><i style="height:4.1px;--c:#a87010"></i></div>
<div class="n" style="left:190.0px;top:379.2px;width:15.0px;height:12.5px"><i style="height:3.9px;--c:#4a80a8"></i></div>
<div class="n" style="left:222.0px;top:383.8px;width:15.0px;height:18.0px"><i style="height:3.9px;--c:#988018"></i><u style="left:0.0px;top:7.0px;width:9.2px;height:10.2px;background:#fde7c2"></u></div>
<div class="n" style="left:253.0px;top:379.2px;width:15.0px;height:10.0px"><i style="height:3.9px;--c:#5a8a5a"></i></div>
<div class="n" style="left:268.0px;top:389.2px;width:15.0px;height:7.0px"><i style="height:4.0px;--c:#9a14a0"></i></div>
<div class="n" style="left:69.0px;top:404.8px;width:15.0px;height:25.0px"><i style="height:4.5px;--c:#1872a8"></i><u style="left:0.0px;top:12.8px;width:10.2px;height:10.2px;background:radial-gradient(circle at 30% 30%,rgba(255,255,255,.14),rgba(255,255,255,0) 45%),radial-gradient(circle at 70% 70%,rgba(0,0,0,.16),rgba(0,0,0,0) 50%),#c8b888"></u></div>
<div class="n" style="left:98.0px;top:409.4px;width:15.0px;height:18.0px"><i style="height:3.9px;--c:#988018"></i><u style="left:0.0px;top:7.0px;width:9.2px;height:10.2px;background:#ffffff"></u></div>
<div class="n" style="left:128.0px;top:404.8px;width:15.0px;height:10.0px"><i style="height:3.9px;--c:#5a8a5a"></i></div>
<div class="n" style="left:158.0px;top:404.8px;width:15.0px;height:8.0px"><i style="height:4.1px;--c:#9a8a14"></i></div>
<div class="n" style="left:190.0px;top:404.8px;width:15.0px;height:12.5px"><i style="height:3.9px;--c:#4a80a8"></i></div>
<div class="n" style="left:222.0px;top:409.4px;width:15.0px;height:18.0px"><i style="height:3.9px;--c:#988018"></i><u style="left:0.0px;top:7.0px;width:9.2px;height:10.2px;background:#d6c587"></u></div>
<div class="n" style="left:253.0px;top:404.8px;width:15.0px;height:10.0px"><i style="height:3.9px;--c:#5a8a5a"></i></div>
<div class="n" style="left:268.0px;top:414.8px;width:15.0px;height:7.0px"><i style="height:4.0px;--c:#1490b0"></i></div>
<div class="n" style="left:69.0px;top:430.4px;width:15.0px;height:25.0px"><i style="height:4.5px;--c:#1872a8"></i><u style="left:0.0px;top:12.8px;width:10.2px;height:10.2px;background:radial-gradient(circle at 30% 30%,rgba(255,255,255,.14),rgba(255,255,255,0) 45%),radial-gradient(circle at 70% 70%,rgba(0,0,0,.16),rgba(0,0,0,0) 50%),#4a3a2e"></u></div>
<div class="n" style="left:98.0px;top:435.0px;width:15.0px;height:18.0px"><i style="height:3.9px;--c:#988018"></i><u style="left:0.0px;top:7.0px;width:9.2px;height:10.2px;background:#ffffff"></u></div>
<div class="n" style="left:128.0px;top:430.4px;width:15.0px;height:10.0px"><i style="height:3.9px;--c:#5a8a5a"></i></div>
<div class="n" style="left:158.0px;top:430.4px;width:15.0px;height:8.0px"><i style="height:4.1px;--c:#5a9a14"></i></div>
<div class="n" style="left:190.0px;top:430.4px;width:15.0px;height:12.5px"><i style="height:3.9px;--c:#4a80a8"></i></div>
<div class="n" style="left:222.0px;top:435.0px;width:15.0px;height:18.0px"><i style="height:3.9px;--c:#988018"></i><u style="left:0.0px;top:7.0px;width:9.2px;height:10.2px;background:#4a3830"></u></div>
<div class="n" style="left:253.0px;top:430.4px;width:15.0px;height:10.0px"><i style="height:3.9px;--c:#5a8a5a"></i></div>
<div class="n" style="left:268.0px;top:440.4px;width:15.0px;height:7.0px"><i style="height:4.0px;--c:#9a14a0"></i></div>
<div class="n" style="left:69.0px;top:456.0px;width:15.0px;height:25.0px"><i style="height:4.5px;--c:#1872a8"></i><u style="left:0.0px;top:12.8px;width:10.2px;height:10.2px;background:radial-gradient(circle at 30% 30%,rgba(255,255,255,.14),rgba(255,255,255,0) 45%),radial-gradient(circle at 70% 70%,rgba(0,0,0,.16),rgba(0,0,0,0) 50%),#7a7a40"></u></div>
<div class="n" style="left:98.0px;top:460.6px;width:15.0px;height:18.0px"><i style="height:3.9px;--c:#988018"></i><u style="left:0.0px;top:7.0px;width:9.2px;height:10.2px;background:#ffffff"></u></div>
<div class="n" style="left:128.0px;top:456.0px;width:15.0px;height:10.0px"><i style="height:3.9px;--c:#5a8a5a"></i></div>
<div class="n" style="left:158.0px;top:456.0px;width:15.0px;height:8.0px"><i style="height:4.1px;--c:#8a9a14"></i></div>
<div class="n" style="left:190.0px;top:456.0px;width:15.0px;height:12.5px"><i style="height:3.9px;--c:#4a80a8"></i></div>
<div class="n" style="left:222.0px;top:460.6px;width:15.0px;height:18.0px"><i style="height:3.9px;--c:#988018"></i><u style="left:0.0px;top:7.0px;width:9.2px;height:10.2px;background:#8ca868"></u></div>
<div class="n" style="left:253.0px;top:456.0px;width:15.0px;height:10.0px"><i style="height:3.9px;--c:#5a8a5a"></i></div>
<div class="n" style="left:268.0px;top:466.0px;width:15.0px;height:7.0px"><i style="height:4.0px;--c:#9a14a0"></i></div>
<div class="n" style="left:69.0px;top:481.6px;width:15.0px;height:25.0px"><i style="height:4.5px;--c:#1872a8"></i><u style="left:0.0px;top:12.8px;width:10.2px;height:10.2px;background:radial-gradient(circle at 30% 30%,rgba(255,255,255,.14),rgba(255,255,255,0) 45%),radial-gradient(circle at 70% 70%,rgba(0,0,0,.16),rgba(0,0,0,0) 50%),#7a8040"></u></div>
<div class="n" style="left:98.0px;top:486.2px;width:15.0px;height:18.0px"><i style="height:3.9px;--c:#988018"></i><u style="left:0.0px;top:7.0px;width:9.2px;height:10.2px;background:#ffffff"></u></div>
<div class="n" style="left:128.0px;top:481.6px;width:15.0px;height:10.0px"><i style="height:3.9px;--c:#5a8a5a"></i></div>
<div class="n" style="left:158.0px;top:481.6px;width:15.0px;height:8.0px"><i style="height:4.1px;--c:#9a14a0"></i></div>
<div class="n" style="left:190.0px;top:481.6px;width:15.0px;height:12.5px"><i style="height:3.9px;--c:#4a80a8"></i></div>
<div class="n" style="left:222.0px;top:486.2px;width:15.0px;height:18.0px"><i style="height:3.9px;--c:#988018"></i><u style="left:0.0px;top:7.0px;width:9.2px;height:10.2px;background:#6aaa78"></u></div>
<div class="n" style="left:253.0px;top:481.6px;width:15.0px;height:10.0px"><i style="height:3.9px;--c:#5a8a5a"></i></div>
<div class="n" style="left:272.0px;top:481.6px;width:15.0px;height:7.0px"><i style="height:4.0px;--c:#9a14a0"></i></div>
<div class="n" style="left:69.0px;top:507.2px;width:15.0px;height:25.0px"><i style="height:4.5px;--c:#1872a8"></i><u style="left:0.0px;top:12.8px;width:10.2px;height:10.2px;background:radial-gradient(circle at 30% 30%,rgba(255,255,255,.14),rgba(255,255,255,0) 45%),radial-gradient(circle at 70% 70%,rgba(0,0,0,.16),rgba(0,0,0,0) 50%),#d0a080"></u></div>
<div class="n" style="left:98.0px;top:511.8px;width:15.0px;height:18.0px"><i style="height:3.9px;--c:#988018"></i><u style="left:0.0px;top:7.0px;width:9.2px;height:10.2px;background:#ffffff"></u></div>
<div class="n" style="left:128.0px;top:507.2px;width:15.0px;height:10.0px"><i style="height:3.9px;--c:#5a8a5a"></i></div>
<div class="n" style="left:158.0px;top:507.2px;width:15.0px;height:8.0px"><i style="height:4.1px;--c:#17a07a"></i></div>
<div class="n" style="left:190.0px;top:507.2px;width:15.0px;height:12.5px"><i style="height:3.9px;--c:#4a80a8"></i></div>
<div class="n" style="left:222.0px;top:511.8px;width:15.0px;height:18.0px"><i style="height:3.9px;--c:#988018"></i><u style="left:0.0px;top:7.0px;width:9.2px;height:10.2px;background:#b89080"></u></div>
<div class="n" style="left:253.0px;top:507.2px;width:15.0px;height:10.0px"><i style="height:3.9px;--c:#5a8a5a"></i></div>
<div class="n" style="left:272.0px;top:507.2px;width:15.0px;height:7.0px"><i style="height:4.0px;--c:#1420a8"></i></div>
<div class="n" style="left:69.0px;top:532.8px;width:15.0px;height:25.0px"><i style="height:4.5px;--c:#1872a8"></i><u style="left:0.0px;top:12.8px;width:10.2px;height:10.2px;background:radial-gradient(circle at 30% 30%,rgba(255,255,255,.14),rgba(255,255,255,0) 45%),radial-gradient(circle at 70% 70%,rgba(0,0,0,.16),rgba(0,0,0,0) 50%),#b8805a"></u></div>
<div class="n" style="left:98.0px;top:537.4px;width:15.0px;height:18.0px"><i style="height:3.9px;--c:#988018"></i><u style="left:0.0px;top:7.0px;width:9.2px;height:10.2px;background:#ffffff"></u></div>
<div class="n" style="left:128.0px;top:532.8px;width:15.0px;height:10.0px"><i style="height:3.9px;--c:#5a8a5a"></i></div>
<div class="n" style="left:158.0px;top:532.8px;width:15.0px;height:8.0px"><i style="height:4.1px;--c:#9a14a0"></i></div>
<div class="n" style="left:190.0px;top:532.8px;width:15.0px;height:12.5px"><i style="height:3.9px;--c:#4a80a8"></i></div>
<div class="n" style="left:222.0px;top:537.4px;width:15.0px;height:18.0px"><i style="height:3.9px;--c:#988018"></i><u style="left:0.0px;top:7.0px;width:9.2px;height:10.2px;background:#b8844e"></u></div>
<div class="n" style="left:253.0px;top:532.8px;width:15.0px;height:10.0px"><i style="height:3.9px;--c:#5a8a5a"></i></div>
<div class="n" style="left:272.0px;top:532.8px;width:15.0px;height:7.0px"><i style="height:4.0px;--c:#1420a8"></i></div>
<div class="n" style="left:69.0px;top:558.4px;width:15.0px;height:25.0px"><i style="height:4.5px;--c:#1872a8"></i><u style="left:0.0px;top:12.8px;width:10.2px;height:10.2px;background:radial-gradient(circle at 30% 30%,rgba(255,255,255,.14),rgba(255,255,255,0) 45%),radial-gradient(circle at 70% 70%,rgba(0,0,0,.16),rgba(0,0,0,0) 50%),#a09880"></u></div>
<div class="n" style="left:98.0px;top:563.0px;width:15.0px;height:18.0px"><i style="height:3.9px;--c:#988018"></i><u style="left:0.0px;top:7.0px;width:9.2px;height:10.2px;background:#ffffff"></u></div>
<div class="n" style="left:128.0px;top:558.4px;width:15.0px;height:10.0px"><i style="height:3.9px;--c:#5a8a5a"></i></div>
<div class="n" style="left:158.0px;top:558.4px;width:15.0px;height:8.0px"><i style="height:4.1px;--c:#1420a8"></i></div>
<div class="n" style="left:190.0px;top:558.4px;width:15.0px;height:12.5px"><i style="height:3.9px;--c:#4a80a8"></i></div>
<div class="n" style="left:222.0px;top:563.0px;width:15.0px;height:18.0px"><i style="height:3.9px;--c:#988018"></i><u style="left:0.0px;top:7.0px;width:9.2px;height:10.2px;background:#a8a4b8"></u></div>
<div class="n" style="left:253.0px;top:558.4px;width:15.0px;height:10.0px"><i style="height:3.9px;--c:#5a8a5a"></i></div>
<div class="n" style="left:272.0px;top:558.4px;width:15.0px;height:7.0px"><i style="height:4.0px;--c:#1420a8"></i></div>
<div class="n" style="left:69.0px;top:584.0px;width:15.0px;height:25.0px"><i style="height:4.5px;--c:#1872a8"></i><u style="left:0.0px;top:12.8px;width:10.2px;height:10.2px;background:radial-gradient(circle at 30% 30%,rgba(255,255,255,.14),rgba(255,255,255,0) 45%),radial-gradient(circle at 70% 70%,rgba(0,0,0,.16),rgba(0,0,0,0) 50%),#4a4a46"></u></div>
<div class="n" style="left:98.0px;top:588.6px;width:15.0px;height:18.0px"><i style="height:3.9px;--c:#988018"></i><u style="left:0.0px;top:7.0px;width:9.2px;height:10.2px;background:#ffffff"></u></div>
<div class="n" style="left:128.0px;top:584.0px;width:15.0px;height:10.0px"><i style="height:3.9px;--c:#5a8a5a"></i></div>
<div class="n" style="left:158.0px;top:584.0px;width:15.0px;height:8.0px"><i style="height:4.1px;--c:#5aa814"></i></div>
<div class="n" style="left:190.0px;top:584.0px;width:15.0px;height:12.5px"><i style="height:3.9px;--c:#4a80a8"></i></div>
<div class="n" style="left:222.0px;top:588.6px;width:15.0px;height:18.0px"><i style="height:3.9px;--c:#988018"></i><u style="left:0.0px;top:7.0px;width:9.2px;height:10.2px;background:#23262c"></u></div>
<div class="n" style="left:253.0px;top:584.0px;width:15.0px;height:10.0px"><i style="height:3.9px;--c:#5a8a5a"></i></div>
<div class="n" style="left:272.0px;top:584.0px;width:15.0px;height:7.0px"><i style="height:4.0px;--c:#1420a8"></i></div>
<div class="n" style="left:11.0px;top:490.0px;width:15.0px;height:9.0px"><i style="height:3.5px;--c:#a01418"></i></div>
<div class="n" style="left:380.0px;top:383.0px;width:15.0px;height:25.0px"><i style="height:4.5px;--c:#1872a8"></i><u style="left:0.0px;top:12.8px;width:10.2px;height:10.2px;background:linear-gradient(135deg,#1818f8 62%,#8060f0)"></u></div>
<div class="n" style="left:408.0px;top:387.0px;width:15.0px;height:18.0px"><i style="height:3.9px;--c:#988018"></i><u style="left:0.0px;top:7.0px;width:9.2px;height:10.2px;background:#0000ff"></u></div>
<div class="n" style="left:433.0px;top:395.0px;width:15.0px;height:7.6px"><i style="height:4.1px;--c:#a01478"></i></div>
<div class="n" style="left:448.0px;top:383.0px;width:15.0px;height:11.6px"><i style="height:3.9px;--c:#5a8a5a"></i></div>
<div class="n" style="left:469.0px;top:383.0px;width:15.0px;height:6.8px"><i style="height:3.9px;--c:#9a14a0"></i></div>
<div class="n" style="left:380.0px;top:408.6px;width:15.0px;height:25.0px"><i style="height:4.5px;--c:#1872a8"></i><u style="left:0.0px;top:12.8px;width:10.2px;height:10.2px;background:radial-gradient(circle at 55% 45%,#7a40f0,#3020f0 70%)"></u></div>
<div class="n" style="left:408.0px;top:412.6px;width:15.0px;height:18.0px"><i style="height:3.9px;--c:#988018"></i><u style="left:0.0px;top:7.0px;width:9.2px;height:10.2px;background:#0000ff"></u></div>
<div class="n" style="left:433.0px;top:420.6px;width:15.0px;height:7.6px"><i style="height:4.1px;--c:#a01478"></i></div>
<div class="n" style="left:448.0px;top:408.6px;width:15.0px;height:11.6px"><i style="height:3.9px;--c:#5a8a5a"></i></div>
<div class="n" style="left:469.0px;top:408.6px;width:15.0px;height:6.8px"><i style="height:3.9px;--c:#9a14a0"></i></div>
<div class="n" style="left:380.0px;top:434.2px;width:15.0px;height:25.0px"><i style="height:4.5px;--c:#1872a8"></i><u style="left:0.0px;top:12.8px;width:10.2px;height:10.2px;background:repeating-linear-gradient(45deg,#2818e8 0 1.5px,#6a40f0 1.5px 2.5px,#1830f8 2.5px 4px)"></u></div>
<div class="n" style="left:408.0px;top:438.2px;width:15.0px;height:18.0px"><i style="height:3.9px;--c:#988018"></i><u style="left:0.0px;top:7.0px;width:9.2px;height:10.2px;background:#0000ff"></u></div>
<div class="n" style="left:433.0px;top:446.2px;width:15.0px;height:7.6px"><i style="height:4.1px;--c:#a01478"></i></div>
<div class="n" style="left:448.0px;top:434.2px;width:15.0px;height:11.6px"><i style="height:3.9px;--c:#5a8a5a"></i></div>
<div class="n" style="left:469.0px;top:434.2px;width:15.0px;height:6.8px"><i style="height:3.9px;--c:#a0a014"></i></div>
<div class="n" style="left:380.0px;top:459.8px;width:15.0px;height:25.0px"><i style="height:4.5px;--c:#1872a8"></i><u style="left:0.0px;top:12.8px;width:10.2px;height:10.2px;background:repeating-linear-gradient(-45deg,#1830f0 0 1.5px,#5a60f8 1.5px 2.5px,#2818e0 2.5px 4px)"></u></div>
<div class="n" style="left:408.0px;top:463.8px;width:15.0px;height:18.0px"><i style="height:3.9px;--c:#988018"></i><u style="left:0.0px;top:7.0px;width:9.2px;height:10.2px;background:#0000ff"></u></div>
<div class="n" style="left:433.0px;top:471.8px;width:15.0px;height:7.6px"><i style="height:4.1px;--c:#a01478"></i></div>
<div class="n" style="left:448.0px;top:459.8px;width:15.0px;height:11.6px"><i style="height:3.9px;--c:#5a8a5a"></i></div>
<div class="n" style="left:469.0px;top:459.8px;width:15.0px;height:6.8px"><i style="height:3.9px;--c:#9a14a0"></i></div>
<div class="n" style="left:380.0px;top:485.4px;width:15.0px;height:25.0px"><i style="height:4.5px;--c:#1872a8"></i><u style="left:0.0px;top:12.8px;width:10.2px;height:10.2px;background:radial-gradient(circle at 60% 50%,#4060f8,#1818f0 70%)"></u></div>
<div class="n" style="left:408.0px;top:489.4px;width:15.0px;height:18.0px"><i style="height:3.9px;--c:#988018"></i><u style="left:0.0px;top:7.0px;width:9.2px;height:10.2px;background:#0000ff"></u></div>
<div class="n" style="left:433.0px;top:497.4px;width:15.0px;height:7.6px"><i style="height:4.1px;--c:#a01478"></i></div>
<div class="n" style="left:448.0px;top:485.4px;width:15.0px;height:11.6px"><i style="height:3.9px;--c:#5a8a5a"></i></div>
<div class="n" style="left:469.0px;top:485.4px;width:15.0px;height:6.8px"><i style="height:3.9px;--c:#a0a014"></i></div>
<div class="n" style="left:380.0px;top:511.0px;width:15.0px;height:25.0px"><i style="height:4.5px;--c:#1872a8"></i><u style="left:0.0px;top:12.8px;width:10.2px;height:10.2px;background:linear-gradient(160deg,#1828f8,#3a60f8)"></u></div>
<div class="n" style="left:408.0px;top:515.0px;width:15.0px;height:18.0px"><i style="height:3.9px;--c:#988018"></i><u style="left:0.0px;top:7.0px;width:9.2px;height:10.2px;background:#0000ff"></u></div>
<div class="n" style="left:433.0px;top:523.0px;width:15.0px;height:7.6px"><i style="height:4.1px;--c:#a01478"></i></div>
<div class="n" style="left:448.0px;top:511.0px;width:15.0px;height:11.6px"><i style="height:3.9px;--c:#5a8a5a"></i></div>
<div class="n" style="left:469.0px;top:511.0px;width:15.0px;height:6.8px"><i style="height:3.9px;--c:#6414c0"></i></div>
<div class="n" style="left:380.0px;top:536.6px;width:15.0px;height:25.0px"><i style="height:4.5px;--c:#1872a8"></i><u style="left:0.0px;top:12.8px;width:10.2px;height:10.2px;background:linear-gradient(200deg,#3a40f8,#5a30e8)"></u></div>
<div class="n" style="left:408.0px;top:540.6px;width:15.0px;height:18.0px"><i style="height:3.9px;--c:#988018"></i><u style="left:0.0px;top:7.0px;width:9.2px;height:10.2px;background:#0000ff"></u></div>
<div class="n" style="left:433.0px;top:548.6px;width:15.0px;height:7.6px"><i style="height:4.1px;--c:#a01478"></i></div>
<div class="n" style="left:448.0px;top:536.6px;width:15.0px;height:11.6px"><i style="height:3.9px;--c:#5a8a5a"></i></div>
<div class="n" style="left:469.0px;top:536.6px;width:15.0px;height:6.8px"><i style="height:3.9px;--c:#9a14a0"></i></div>
<div class="n" style="left:380.0px;top:562.2px;width:15.0px;height:25.0px"><i style="height:4.5px;--c:#1872a8"></i><u style="left:0.0px;top:12.8px;width:10.2px;height:10.2px;background:linear-gradient(135deg,#e040e0 20%,#3a40f0 70%)"></u></div>
<div class="n" style="left:408.0px;top:566.2px;width:15.0px;height:18.0px"><i style="height:3.9px;--c:#988018"></i><u style="left:0.0px;top:7.0px;width:9.2px;height:10.2px;background:#0000ff"></u></div>
<div class="n" style="left:433.0px;top:574.2px;width:15.0px;height:7.6px"><i style="height:4.1px;--c:#a01478"></i></div>
<div class="n" style="left:448.0px;top:562.2px;width:15.0px;height:11.6px"><i style="height:3.9px;--c:#5a8a5a"></i></div>
<div class="n" style="left:469.0px;top:562.2px;width:15.0px;height:6.8px"><i style="height:3.9px;--c:#a8103c"></i></div>
<div class="n" style="left:380.0px;top:587.8px;width:15.0px;height:25.0px"><i style="height:4.5px;--c:#1872a8"></i><u style="left:0.0px;top:12.8px;width:10.2px;height:10.2px;background:linear-gradient(180deg,#6a30f0 45%,#60b0f8)"></u></div>
<div class="n" style="left:408.0px;top:591.8px;width:15.0px;height:18.0px"><i style="height:3.9px;--c:#988018"></i><u style="left:0.0px;top:7.0px;width:9.2px;height:10.2px;background:#0000ff"></u></div>
<div class="n" style="left:433.0px;top:599.8px;width:15.0px;height:7.6px"><i style="height:4.1px;--c:#a01478"></i></div>
<div class="n" style="left:448.0px;top:587.8px;width:15.0px;height:11.6px"><i style="height:3.9px;--c:#5a8a5a"></i></div>
<div class="n" style="left:469.0px;top:587.8px;width:15.0px;height:6.8px"><i style="height:3.9px;--c:#14a0a0"></i></div>
<div class="n" style="left:339.0px;top:488.0px;width:15.0px;height:10.0px"><i style="height:3.7px;--c:#a01418"></i></div>
<div class="n" style="left:548.9px;top:386.7px;width:15.0px;height:9.2px"><i style="height:3.9px;--c:#a01418"></i></div>
<div class="n" style="left:584.0px;top:384.2px;width:15.0px;height:25.0px"><i style="height:4.5px;--c:#1872a8"></i><u style="left:0.0px;top:12.8px;width:10.2px;height:10.2px;background:radial-gradient(circle at 35% 40%,#f2f0ec,#c8c4be 60%,#a8a49e)"></u></div>
<div class="n" style="left:616.0px;top:384.9px;width:15.0px;height:13.0px"><i style="height:3.9px;--c:#5a8a5a"></i></div>
<div class="n" style="left:637.0px;top:384.9px;width:15.0px;height:15.0px"><i style="height:3.9px;--c:#5a8a5a"></i></div>
<div class="n" style="left:657.0px;top:384.9px;width:15.0px;height:7.8px"><i style="height:4.1px;--c:#149878"></i></div>
<div class="n" style="left:548.0px;top:417.9px;width:15.0px;height:9.2px"><i style="height:3.9px;--c:#a01418"></i></div>
<div class="n" style="left:584.0px;top:415.4px;width:15.0px;height:25.0px"><i style="height:4.5px;--c:#1872a8"></i><u style="left:0.0px;top:12.8px;width:10.2px;height:10.2px;background:radial-gradient(circle at 35% 40%,#f2f0ec,#c8c4be 60%,#a8a49e)"></u></div>
<div class="n" style="left:616.0px;top:416.1px;width:15.0px;height:13.0px"><i style="height:3.9px;--c:#5a8a5a"></i></div>
<div class="n" style="left:636.0px;top:416.1px;width:15.0px;height:15.0px"><i style="height:3.9px;--c:#5a8a5a"></i></div>
<div class="n" style="left:657.0px;top:416.1px;width:15.0px;height:7.8px"><i style="height:4.1px;--c:#149878"></i></div>
<div class="n" style="left:548.0px;top:448.1px;width:15.0px;height:9.2px"><i style="height:3.9px;--c:#a01418"></i></div>
<div class="n" style="left:584.0px;top:445.6px;width:15.0px;height:25.0px"><i style="height:4.5px;--c:#1872a8"></i><u style="left:0.0px;top:12.8px;width:10.2px;height:10.2px;background:radial-gradient(circle at 35% 40%,#f2f0ec,#c8c4be 60%,#a8a49e)"></u></div>
<div class="n" style="left:616.0px;top:446.3px;width:15.0px;height:13.0px"><i style="height:3.9px;--c:#5a8a5a"></i></div>
<div class="n" style="left:636.0px;top:446.3px;width:15.0px;height:15.0px"><i style="height:3.9px;--c:#5a8a5a"></i></div>
<div class="n" style="left:657.0px;top:446.3px;width:15.0px;height:7.8px"><i style="height:4.1px;--c:#149878"></i></div>
<div class="n" style="left:548.0px;top:478.8px;width:15.0px;height:9.2px"><i style="height:3.9px;--c:#a01418"></i></div>
<div class="n" style="left:584.0px;top:476.3px;width:15.0px;height:25.0px"><i style="height:4.5px;--c:#1872a8"></i><u style="left:0.0px;top:12.8px;width:10.2px;height:10.2px;background:radial-gradient(circle at 35% 40%,#f2f0ec,#c8c4be 60%,#a8a49e)"></u></div>
<div class="n" style="left:616.0px;top:477.0px;width:15.0px;height:13.0px"><i style="height:3.9px;--c:#5a8a5a"></i></div>
<div class="n" style="left:636.0px;top:477.0px;width:15.0px;height:15.0px"><i style="height:3.9px;--c:#5a8a5a"></i></div>
<div class="n" style="left:657.0px;top:477.0px;width:15.0px;height:7.8px"><i style="height:4.1px;--c:#149878"></i></div>
<div class="n" style="left:548.0px;top:507.0px;width:15.0px;height:9.2px"><i style="height:3.9px;--c:#a01418"></i></div>
<div class="n" style="left:584.0px;top:504.5px;width:15.0px;height:25.0px"><i style="height:4.5px;--c:#1872a8"></i><u style="left:0.0px;top:12.8px;width:10.2px;height:10.2px;background:radial-gradient(circle at 35% 40%,#f2f0ec,#c8c4be 60%,#a8a49e)"></u></div>
<div class="n" style="left:616.0px;top:505.2px;width:15.0px;height:13.0px"><i style="height:3.9px;--c:#5a8a5a"></i></div>
<div class="n" style="left:636.0px;top:505.2px;width:15.0px;height:15.0px"><i style="height:3.9px;--c:#5a8a5a"></i></div>
<div class="n" style="left:657.0px;top:505.2px;width:15.0px;height:7.8px"><i style="height:4.1px;--c:#149878"></i></div>
<div class="n" style="left:548.0px;top:538.2px;width:15.0px;height:9.2px"><i style="height:3.9px;--c:#a01418"></i></div>
<div class="n" style="left:584.0px;top:535.7px;width:15.0px;height:25.0px"><i style="height:4.5px;--c:#1872a8"></i><u style="left:0.0px;top:12.8px;width:10.2px;height:10.2px;background:radial-gradient(circle at 35% 40%,#f2f0ec,#c8c4be 60%,#a8a49e)"></u></div>
<div class="n" style="left:616.0px;top:536.4px;width:15.0px;height:13.0px"><i style="height:3.9px;--c:#5a8a5a"></i></div>
<div class="n" style="left:636.0px;top:536.4px;width:15.0px;height:15.0px"><i style="height:3.9px;--c:#5a8a5a"></i></div>
<div class="n" style="left:657.0px;top:536.4px;width:15.0px;height:7.8px"><i style="height:4.1px;--c:#149878"></i></div>
<div class="n" style="left:548.0px;top:568.1px;width:15.0px;height:9.2px"><i style="height:3.9px;--c:#a01418"></i></div>
<div class="n" style="left:584.0px;top:565.6px;width:15.0px;height:25.0px"><i style="height:4.5px;--c:#1872a8"></i><u style="left:0.0px;top:12.8px;width:10.2px;height:10.2px;background:radial-gradient(circle at 35% 40%,#f2f0ec,#c8c4be 60%,#a8a49e)"></u></div>
<div class="n" style="left:616.0px;top:566.3px;width:15.0px;height:13.0px"><i style="height:3.9px;--c:#5a8a5a"></i></div>
<div class="n" style="left:636.0px;top:566.3px;width:15.0px;height:15.0px"><i style="height:3.9px;--c:#5a8a5a"></i></div>
<div class="n" style="left:657.0px;top:566.3px;width:15.0px;height:7.8px"><i style="height:4.1px;--c:#149878"></i></div>
<div class="n" style="left:548.0px;top:598.8px;width:15.0px;height:9.2px"><i style="height:3.9px;--c:#a01418"></i></div>
<div class="n" style="left:584.0px;top:596.3px;width:15.0px;height:25.0px"><i style="height:4.5px;--c:#1872a8"></i><u style="left:0.0px;top:12.8px;width:10.2px;height:10.2px;background:radial-gradient(circle at 35% 40%,#f2f0ec,#c8c4be 60%,#a8a49e)"></u></div>
<div class="n" style="left:616.0px;top:597.0px;width:15.0px;height:13.0px"><i style="height:3.9px;--c:#5a8a5a"></i></div>
<div class="n" style="left:636.0px;top:597.0px;width:15.0px;height:15.0px"><i style="height:3.9px;--c:#5a8a5a"></i></div>
<div class="n" style="left:657.0px;top:597.0px;width:15.0px;height:7.8px"><i style="height:4.1px;--c:#149878"></i></div>
<div class="n" style="left:548.0px;top:629.0px;width:15.0px;height:9.2px"><i style="height:3.9px;--c:#a01418"></i></div>
<div class="n" style="left:584.0px;top:626.5px;width:15.0px;height:25.0px"><i style="height:4.5px;--c:#1872a8"></i><u style="left:0.0px;top:12.8px;width:10.2px;height:10.2px;background:radial-gradient(circle at 35% 40%,#f2f0ec,#c8c4be 60%,#a8a49e)"></u></div>
<div class="n" style="left:616.0px;top:627.2px;width:15.0px;height:13.0px"><i style="height:3.9px;--c:#5a8a5a"></i></div>
<div class="n" style="left:636.0px;top:627.2px;width:15.0px;height:15.0px"><i style="height:3.9px;--c:#5a8a5a"></i></div>
<div class="n" style="left:657.0px;top:627.2px;width:15.0px;height:7.8px"><i style="height:4.1px;--c:#149878"></i></div>
<div class="n" style="left:611.0px;top:640.0px;width:14.5px;height:7.5px"><i style="height:4.1px;--c:#1420a8"></i></div>
<div class="n" style="left:701.9px;top:384.2px;width:15.0px;height:7.6px"><i style="height:4.1px;--c:#a87010"></i></div>
<div class="n" style="left:701.9px;top:392.2px;width:15.0px;height:7.6px"><i style="height:4.1px;--c:#9a14a0"></i></div>
<div class="n" style="left:701.9px;top:400.2px;width:15.0px;height:7.6px"><i style="height:4.1px;--c:#149878"></i></div>
<div class="n" style="left:737.0px;top:384.2px;width:15.0px;height:12.7px"><i style="height:3.9px;--c:#5a8a5a"></i></div>
<div class="n" style="left:747.2px;top:384.2px;width:15.0px;height:7.4px"><i style="height:4.1px;--c:#9a14a0"></i></div>
<div class="n" style="left:701.9px;top:414.9px;width:15.0px;height:7.6px"><i style="height:4.1px;--c:#a08a14"></i></div>
<div class="n" style="left:701.9px;top:422.9px;width:15.0px;height:7.6px"><i style="height:4.1px;--c:#1490b0"></i></div>
<div class="n" style="left:701.9px;top:430.9px;width:15.0px;height:7.6px"><i style="height:4.1px;--c:#149878"></i></div>
<div class="n" style="left:737.0px;top:414.9px;width:15.0px;height:12.7px"><i style="height:3.9px;--c:#5a8a5a"></i></div>
<div class="n" style="left:748.0px;top:408.6px;width:15.0px;height:7.4px"><i style="height:4.1px;--c:#a08a14"></i></div>
<div class="n" style="left:701.9px;top:444.8px;width:15.0px;height:7.6px"><i style="height:4.1px;--c:#5aa814"></i></div>
<div class="n" style="left:701.9px;top:452.8px;width:15.0px;height:7.6px"><i style="height:4.1px;--c:#9a14a0"></i></div>
<div class="n" style="left:701.9px;top:460.8px;width:15.0px;height:7.6px"><i style="height:4.1px;--c:#149878"></i></div>
<div class="n" style="left:737.0px;top:444.8px;width:15.0px;height:12.7px"><i style="height:3.9px;--c:#5a8a5a"></i></div>
<div class="n" style="left:748.0px;top:438.5px;width:15.0px;height:7.4px"><i style="height:4.1px;--c:#a08a14"></i></div>
<div class="n" style="left:701.9px;top:476.8px;width:15.0px;height:7.6px"><i style="height:4.1px;--c:#a0a014"></i></div>
<div class="n" style="left:701.9px;top:484.8px;width:15.0px;height:7.6px"><i style="height:4.1px;--c:#9a14a0"></i></div>
<div class="n" style="left:701.9px;top:492.8px;width:15.0px;height:7.6px"><i style="height:4.1px;--c:#149878"></i></div>
<div class="n" style="left:737.0px;top:476.8px;width:15.0px;height:12.7px"><i style="height:3.9px;--c:#5a8a5a"></i></div>
<div class="n" style="left:748.0px;top:470.5px;width:15.0px;height:7.4px"><i style="height:4.1px;--c:#a08a14"></i></div>
<div class="n" style="left:701.9px;top:508.9px;width:15.0px;height:7.6px"><i style="height:4.1px;--c:#9a14a0"></i></div>
<div class="n" style="left:701.9px;top:516.9px;width:15.0px;height:7.6px"><i style="height:4.1px;--c:#9a14a0"></i></div>
<div class="n" style="left:701.9px;top:524.9px;width:15.0px;height:7.6px"><i style="height:4.1px;--c:#149878"></i></div>
<div class="n" style="left:737.0px;top:508.9px;width:15.0px;height:12.7px"><i style="height:3.9px;--c:#5a8a5a"></i></div>
<div class="n" style="left:748.0px;top:502.6px;width:15.0px;height:7.4px"><i style="height:4.1px;--c:#a08a14"></i></div>
<div class="n" style="left:701.9px;top:543.1px;width:15.0px;height:7.6px"><i style="height:4.1px;--c:#149878"></i></div>
<div class="n" style="left:701.9px;top:551.1px;width:15.0px;height:7.6px"><i style="height:4.1px;--c:#1420a8"></i></div>
<div class="n" style="left:701.9px;top:559.1px;width:15.0px;height:7.6px"><i style="height:4.1px;--c:#149878"></i></div>
<div class="n" style="left:737.0px;top:543.1px;width:15.0px;height:12.7px"><i style="height:3.9px;--c:#5a8a5a"></i></div>
<div class="n" style="left:748.0px;top:536.8px;width:15.0px;height:7.4px"><i style="height:4.1px;--c:#a08a14"></i></div>
<div class="n" style="left:701.9px;top:575.0px;width:15.0px;height:7.6px"><i style="height:4.1px;--c:#9a14a0"></i></div>
<div class="n" style="left:701.9px;top:583.0px;width:15.0px;height:7.6px"><i style="height:4.1px;--c:#1420a8"></i></div>
<div class="n" style="left:701.9px;top:591.0px;width:15.0px;height:7.6px"><i style="height:4.1px;--c:#149878"></i></div>
<div class="n" style="left:737.0px;top:575.0px;width:15.0px;height:12.7px"><i style="height:3.9px;--c:#5a8a5a"></i></div>
<div class="n" style="left:748.0px;top:568.7px;width:15.0px;height:7.4px"><i style="height:4.1px;--c:#a08a14"></i></div>
<div class="n" style="left:701.9px;top:607.9px;width:15.0px;height:7.6px"><i style="height:4.1px;--c:#1420a8"></i></div>
<div class="n" style="left:701.9px;top:615.9px;width:15.0px;height:7.6px"><i style="height:4.1px;--c:#1420a8"></i></div>
<div class="n" style="left:701.9px;top:623.9px;width:15.0px;height:7.6px"><i style="height:4.1px;--c:#149878"></i></div>
<div class="n" style="left:737.0px;top:607.9px;width:15.0px;height:12.7px"><i style="height:3.9px;--c:#5a8a5a"></i></div>
<div class="n" style="left:748.0px;top:601.6px;width:15.0px;height:7.4px"><i style="height:4.1px;--c:#a08a14"></i></div>
<div class="n" style="left:702.1px;top:640.0px;width:15.0px;height:7.8px"><i style="height:4.1px;--c:#5aa814"></i></div>
<div class="n" style="left:694.9px;top:650.1px;width:15.0px;height:7.6px"><i style="height:4.1px;--c:#149878"></i></div>
<div class="n" style="left:737.0px;top:640.0px;width:15.0px;height:13.0px"><i style="height:3.9px;--c:#5a8a5a"></i></div>
<div class="n" style="left:748.0px;top:634.0px;width:15.0px;height:7.4px"><i style="height:4.1px;--c:#a08a14"></i></div>
<div class="n" style="left:853.0px;top:295.1px;width:15.0px;height:8.6px"><i style="height:3.5px;--c:#a01418"></i></div>
<div class="n" style="left:882.9px;top:295.1px;width:15.0px;height:25.0px"><i style="height:4.5px;--c:#1872a8"></i><u style="left:0.0px;top:12.8px;width:10.2px;height:10.2px;background:radial-gradient(circle at 40% 40%,#f0f0f0,#c0c0c0)"></u></div>
<div class="n" style="left:908.8px;top:295.1px;width:15.0px;height:12.6px"><i style="height:3.9px;--c:#5a8a5a"></i></div>
<div class="n" style="left:929.0px;top:295.0px;width:15.0px;height:9.8px"><i style="height:3.9px;--c:#5a8a5a"></i></div>
<div class="n" style="left:941.8px;top:295.0px;width:15.0px;height:9.8px"><i style="height:3.9px;--c:#5a8a5a"></i></div>
<div class="n" style="left:926.0px;top:305.8px;width:15.0px;height:7.0px"><i style="height:3.1px;--c:#a01418"></i></div>
<div class="n" style="left:960.9px;top:295.0px;width:15.0px;height:9.8px"><i style="height:3.9px;--c:#5a8a5a"></i></div>
<div class="n" style="left:984.0px;top:295.0px;width:15.0px;height:14.8px"><i style="height:3.9px;--c:#5a8a5a"></i></div>
<div class="n" style="left:1001.0px;top:295.0px;width:15.0px;height:6.7px"><i style="height:3.8px;--c:#9a14a0"></i></div>
<div class="n" style="left:850.5px;top:376.2px;width:15.0px;height:9.0px"><i style="height:3.7px;--c:#a01418"></i></div>
<div class="n" style="left:878.5px;top:376.2px;width:15.0px;height:25.0px"><i style="height:4.5px;--c:#1872a8"></i><u style="left:0.0px;top:12.8px;width:10.2px;height:10.2px;background:radial-gradient(circle at 30% 30%,rgba(255,255,255,.14),rgba(255,255,255,0) 45%),radial-gradient(circle at 70% 70%,rgba(0,0,0,.16),rgba(0,0,0,0) 50%),#a88870"></u></div>
<div class="n" style="left:878.5px;top:402.2px;width:15.0px;height:18.0px"><i style="height:3.7px;--c:#988018"></i><u style="left:0.0px;top:6.5px;width:10.0px;height:10.5px;background:#b88868"></u></div>
<div class="n" style="left:878.5px;top:422.7px;width:15.0px;height:7.5px"><i style="height:4.1px;--c:#5aa814"></i></div>
<div class="n" style="left:914.5px;top:376.2px;width:15.0px;height:12.7px"><i style="height:3.9px;--c:#5a8a5a"></i></div>
<div class="n" style="left:934.5px;top:376.2px;width:15.0px;height:6.8px"><i style="height:3.9px;--c:#6414c0"></i></div>
<div class="n" style="left:851.5px;top:438.9px;width:15.0px;height:9.0px"><i style="height:3.7px;--c:#a01418"></i></div>
<div class="n" style="left:879.5px;top:438.9px;width:15.0px;height:25.0px"><i style="height:4.5px;--c:#1872a8"></i><u style="left:0.0px;top:12.8px;width:10.2px;height:10.2px;background:radial-gradient(circle at 30% 30%,rgba(255,255,255,.14),rgba(255,255,255,0) 45%),radial-gradient(circle at 70% 70%,rgba(0,0,0,.16),rgba(0,0,0,0) 50%),#c0b080"></u></div>
<div class="n" style="left:879.5px;top:464.9px;width:15.0px;height:18.0px"><i style="height:3.7px;--c:#988018"></i><u style="left:0.0px;top:6.5px;width:10.0px;height:10.5px;background:#c0a878"></u></div>
<div class="n" style="left:879.5px;top:485.4px;width:15.0px;height:7.5px"><i style="height:4.1px;--c:#5aa814"></i></div>
<div class="n" style="left:915.5px;top:438.9px;width:15.0px;height:12.7px"><i style="height:3.9px;--c:#5a8a5a"></i></div>
<div class="n" style="left:935.5px;top:438.9px;width:15.0px;height:6.8px"><i style="height:3.9px;--c:#6414c0"></i></div>
<div class="n" style="left:851.5px;top:501.1px;width:15.0px;height:9.0px"><i style="height:3.7px;--c:#a01418"></i></div>
<div class="n" style="left:879.5px;top:501.1px;width:15.0px;height:25.0px"><i style="height:4.5px;--c:#1872a8"></i><u style="left:0.0px;top:12.8px;width:10.2px;height:10.2px;background:radial-gradient(circle at 30% 30%,rgba(255,255,255,.14),rgba(255,255,255,0) 45%),radial-gradient(circle at 70% 70%,rgba(0,0,0,.16),rgba(0,0,0,0) 50%),#55452e"></u></div>
<div class="n" style="left:879.5px;top:527.1px;width:15.0px;height:18.0px"><i style="height:3.7px;--c:#988018"></i><u style="left:0.0px;top:6.5px;width:10.0px;height:10.5px;background:#3a2a25"></u></div>
<div class="n" style="left:879.5px;top:547.6px;width:15.0px;height:7.5px"><i style="height:4.1px;--c:#5aa814"></i></div>
<div class="n" style="left:915.5px;top:501.1px;width:15.0px;height:12.7px"><i style="height:3.9px;--c:#5a8a5a"></i></div>
<div class="n" style="left:935.5px;top:501.1px;width:15.0px;height:6.8px"><i style="height:3.9px;--c:#6414c0"></i></div>
<div class="n" style="left:851.5px;top:563.7px;width:15.0px;height:9.0px"><i style="height:3.7px;--c:#a01418"></i></div>
<div class="n" style="left:879.5px;top:563.7px;width:15.0px;height:25.0px"><i style="height:4.5px;--c:#1872a8"></i><u style="left:0.0px;top:12.8px;width:10.2px;height:10.2px;background:radial-gradient(circle at 30% 30%,rgba(255,255,255,.14),rgba(255,255,255,0) 45%),radial-gradient(circle at 70% 70%,rgba(0,0,0,.16),rgba(0,0,0,0) 50%),#807448"></u></div>
<div class="n" style="left:879.5px;top:589.7px;width:15.0px;height:18.0px"><i style="height:3.7px;--c:#988018"></i><u style="left:0.0px;top:6.5px;width:10.0px;height:10.5px;background:#848040"></u></div>
<div class="n" style="left:879.5px;top:610.2px;width:15.0px;height:7.5px"><i style="height:4.1px;--c:#5aa814"></i></div>
<div class="n" style="left:915.5px;top:563.7px;width:15.0px;height:12.7px"><i style="height:3.9px;--c:#5a8a5a"></i></div>
<div class="n" style="left:935.5px;top:563.7px;width:15.0px;height:6.8px"><i style="height:3.9px;--c:#6414c0"></i></div>
<div class="n" style="left:851.5px;top:626.2px;width:15.0px;height:9.0px"><i style="height:3.7px;--c:#a01418"></i></div>
<div class="n" style="left:879.5px;top:626.2px;width:15.0px;height:25.0px"><i style="height:4.5px;--c:#1872a8"></i><u style="left:0.0px;top:12.8px;width:10.2px;height:10.2px;background:radial-gradient(circle at 30% 30%,rgba(255,255,255,.14),rgba(255,255,255,0) 45%),radial-gradient(circle at 70% 70%,rgba(0,0,0,.16),rgba(0,0,0,0) 50%),#747848"></u></div>
<div class="n" style="left:879.5px;top:652.2px;width:15.0px;height:18.0px"><i style="height:3.7px;--c:#988018"></i><u style="left:0.0px;top:6.5px;width:10.0px;height:10.5px;background:#686a3c"></u></div>
<div class="n" style="left:879.5px;top:672.7px;width:15.0px;height:7.5px"><i style="height:4.1px;--c:#5aa814"></i></div>
<div class="n" style="left:915.5px;top:626.2px;width:15.0px;height:12.7px"><i style="height:3.9px;--c:#5a8a5a"></i></div>
<div class="n" style="left:935.5px;top:626.2px;width:15.0px;height:6.8px"><i style="height:3.9px;--c:#6414c0"></i></div>
<div class="n" style="left:1000.2px;top:379.2px;width:15.0px;height:9.0px"><i style="height:3.7px;--c:#a01418"></i></div>
<div class="n" style="left:1027.4px;top:379.2px;width:15.0px;height:25.0px"><i style="height:4.5px;--c:#1872a8"></i><u style="left:0.0px;top:12.8px;width:10.2px;height:10.2px;background:radial-gradient(circle at 30% 30%,rgba(255,255,255,.14),rgba(255,255,255,0) 45%),radial-gradient(circle at 70% 70%,rgba(0,0,0,.16),rgba(0,0,0,0) 50%),#c8a080"></u></div>
<div class="n" style="left:1027.4px;top:405.2px;width:15.0px;height:18.0px"><i style="height:3.7px;--c:#988018"></i><u style="left:0.0px;top:6.5px;width:10.0px;height:10.5px;background:#c89068"></u></div>
<div class="n" style="left:1027.4px;top:425.7px;width:15.0px;height:7.5px"><i style="height:4.1px;--c:#5aa814"></i></div>
<div class="n" style="left:1064.0px;top:379.2px;width:15.0px;height:12.7px"><i style="height:3.9px;--c:#5a8a5a"></i></div>
<div class="n" style="left:1083.0px;top:379.2px;width:15.0px;height:6.8px"><i style="height:3.9px;--c:#6414c0"></i></div>
<div class="n" style="left:1000.2px;top:442.2px;width:15.0px;height:9.0px"><i style="height:3.7px;--c:#a01418"></i></div>
<div class="n" style="left:1027.4px;top:442.2px;width:15.0px;height:25.0px"><i style="height:4.5px;--c:#1872a8"></i><u style="left:0.0px;top:12.8px;width:10.2px;height:10.2px;background:radial-gradient(circle at 30% 30%,rgba(255,255,255,.14),rgba(255,255,255,0) 45%),radial-gradient(circle at 70% 70%,rgba(0,0,0,.16),rgba(0,0,0,0) 50%),#c09070"></u></div>
<div class="n" style="left:1027.4px;top:468.2px;width:15.0px;height:18.0px"><i style="height:3.7px;--c:#988018"></i><u style="left:0.0px;top:6.5px;width:10.0px;height:10.5px;background:#c08a68"></u></div>
<div class="n" style="left:1027.4px;top:488.7px;width:15.0px;height:7.5px"><i style="height:4.1px;--c:#5aa814"></i></div>
<div class="n" style="left:1064.0px;top:442.2px;width:15.0px;height:12.7px"><i style="height:3.9px;--c:#5a8a5a"></i></div>
<div class="n" style="left:1075.7px;top:442.2px;width:15.0px;height:6.8px"><i style="height:3.9px;--c:#6414c0"></i></div>
<div class="n" style="left:1000.2px;top:506.0px;width:15.0px;height:9.0px"><i style="height:3.7px;--c:#a01418"></i></div>
<div class="n" style="left:1027.4px;top:506.0px;width:15.0px;height:25.0px"><i style="height:4.5px;--c:#1872a8"></i><u style="left:0.0px;top:12.8px;width:10.2px;height:10.2px;background:radial-gradient(circle at 30% 30%,rgba(255,255,255,.14),rgba(255,255,255,0) 45%),radial-gradient(circle at 70% 70%,rgba(0,0,0,.16),rgba(0,0,0,0) 50%),#a09888"></u></div>
<div class="n" style="left:1027.4px;top:532.0px;width:15.0px;height:18.0px"><i style="height:3.7px;--c:#988018"></i><u style="left:0.0px;top:6.5px;width:10.0px;height:10.5px;background:#b8b0a0"></u></div>
<div class="n" style="left:1027.4px;top:552.5px;width:15.0px;height:7.5px"><i style="height:4.1px;--c:#5aa814"></i></div>
<div class="n" style="left:1064.0px;top:506.0px;width:15.0px;height:12.7px"><i style="height:3.9px;--c:#5a8a5a"></i></div>
<div class="n" style="left:1083.0px;top:506.0px;width:15.0px;height:6.8px"><i style="height:3.9px;--c:#6414c0"></i></div>
<div class="n" style="left:1000.2px;top:566.9px;width:15.0px;height:9.0px"><i style="height:3.7px;--c:#a01418"></i></div>
<div class="n" style="left:1027.4px;top:566.9px;width:15.0px;height:25.0px"><i style="height:4.5px;--c:#1872a8"></i><u style="left:0.0px;top:12.8px;width:10.2px;height:10.2px;background:radial-gradient(circle at 30% 30%,rgba(255,255,255,.14),rgba(255,255,255,0) 45%),radial-gradient(circle at 70% 70%,rgba(0,0,0,.16),rgba(0,0,0,0) 50%),#5a5550"></u></div>
<div class="n" style="left:1027.4px;top:592.9px;width:15.0px;height:18.0px"><i style="height:3.7px;--c:#988018"></i><u style="left:0.0px;top:6.5px;width:10.0px;height:10.5px;background:#b8b0a0"></u></div>
<div class="n" style="left:1027.4px;top:613.4px;width:15.0px;height:7.5px"><i style="height:4.1px;--c:#5aa814"></i></div>
<div class="n" style="left:1064.0px;top:566.9px;width:15.0px;height:12.7px"><i style="height:3.9px;--c:#5a8a5a"></i></div>
<div class="n" style="left:1083.0px;top:566.9px;width:15.0px;height:6.8px"><i style="height:3.9px;--c:#6414c0"></i></div>
<div class="n" style="left:1233.9px;top:388.3px;width:15.0px;height:6.8px"><i style="height:3.9px;--c:#9a14a0"></i></div>
<div class="n" style="left:1225.9px;top:394.9px;width:15.0px;height:6.8px"><i style="height:3.9px;--c:#6414c0"></i></div>
<div class="n" style="left:1240.0px;top:402.0px;width:15.0px;height:6.8px"><i style="height:3.9px;--c:#a8107a"></i></div>
<div class="n" style="left:1256.9px;top:387.1px;width:15.0px;height:12.6px"><i style="height:3.9px;--c:#5a8a5a"></i></div>
<div class="n" style="left:1277.9px;top:387.1px;width:15.0px;height:7.2px"><i style="height:4.1px;--c:#9a14a0"></i></div>
<div class="n" style="left:1232.0px;top:415.8px;width:15.0px;height:6.8px"><i style="height:3.9px;--c:#a08a14"></i></div>
<div class="n" style="left:1224.0px;top:422.8px;width:15.0px;height:6.8px"><i style="height:3.9px;--c:#6414c0"></i></div>
<div class="n" style="left:1238.0px;top:428.9px;width:15.0px;height:6.8px"><i style="height:3.9px;--c:#a8107a"></i></div>
<div class="n" style="left:1255.9px;top:415.2px;width:15.0px;height:12.6px"><i style="height:3.9px;--c:#5a8a5a"></i></div>
<div class="n" style="left:1276.9px;top:415.2px;width:15.0px;height:7.2px"><i style="height:4.1px;--c:#9a14a0"></i></div>
<div class="n" style="left:1235.0px;top:443.2px;width:15.0px;height:6.8px"><i style="height:3.9px;--c:#a08a14"></i></div>
<div class="n" style="left:1227.0px;top:450.0px;width:15.0px;height:6.8px"><i style="height:3.9px;--c:#6414c0"></i></div>
<div class="n" style="left:1238.0px;top:456.0px;width:15.0px;height:6.8px"><i style="height:3.9px;--c:#a8107a"></i></div>
<div class="n" style="left:1255.9px;top:442.2px;width:15.0px;height:12.6px"><i style="height:3.9px;--c:#5a8a5a"></i></div>
<div class="n" style="left:1276.9px;top:442.2px;width:15.0px;height:7.2px"><i style="height:4.1px;--c:#9a14a0"></i></div>
<div class="n" style="left:1232.0px;top:471.8px;width:15.0px;height:6.8px"><i style="height:3.9px;--c:#a08a14"></i></div>
<div class="n" style="left:1224.0px;top:478.9px;width:15.0px;height:6.8px"><i style="height:3.9px;--c:#6414c0"></i></div>
<div class="n" style="left:1236.2px;top:485.1px;width:15.0px;height:6.8px"><i style="height:3.9px;--c:#a8107a"></i></div>
<div class="n" style="left:1254.0px;top:470.9px;width:15.0px;height:12.6px"><i style="height:3.9px;--c:#5a8a5a"></i></div>
<div class="n" style="left:1275.0px;top:470.9px;width:15.0px;height:7.2px"><i style="height:4.1px;--c:#9a14a0"></i></div>
<div class="n" style="left:1232.0px;top:501.3px;width:15.0px;height:6.8px"><i style="height:3.9px;--c:#a08a14"></i></div>
<div class="n" style="left:1224.0px;top:507.5px;width:15.0px;height:6.8px"><i style="height:3.9px;--c:#6414c0"></i></div>
<div class="n" style="left:1236.2px;top:514.2px;width:15.0px;height:6.8px"><i style="height:3.9px;--c:#a8107a"></i></div>
<div class="n" style="left:1254.0px;top:499.4px;width:15.0px;height:12.6px"><i style="height:3.9px;--c:#5a8a5a"></i></div>
<div class="n" style="left:1275.0px;top:499.4px;width:15.0px;height:7.2px"><i style="height:4.1px;--c:#9a14a0"></i></div>
<div class="n" style="left:1230.0px;top:530.0px;width:15.0px;height:6.8px"><i style="height:3.9px;--c:#a08a14"></i></div>
<div class="n" style="left:1222.0px;top:536.0px;width:15.0px;height:6.8px"><i style="height:3.9px;--c:#6414c0"></i></div>
<div class="n" style="left:1236.2px;top:543.0px;width:15.0px;height:6.8px"><i style="height:3.9px;--c:#a8107a"></i></div>
<div class="n" style="left:1254.0px;top:528.0px;width:15.0px;height:12.6px"><i style="height:3.9px;--c:#5a8a5a"></i></div>
<div class="n" style="left:1275.0px;top:528.0px;width:15.0px;height:7.2px"><i style="height:4.1px;--c:#9a14a0"></i></div>
<div class="n" style="left:1227.0px;top:557.0px;width:15.0px;height:6.8px"><i style="height:3.9px;--c:#a08a14"></i></div>
<div class="n" style="left:1219.0px;top:563.6px;width:15.0px;height:6.8px"><i style="height:3.9px;--c:#6414c0"></i></div>
<div class="n" style="left:1236.2px;top:570.2px;width:15.0px;height:6.8px"><i style="height:3.9px;--c:#a8107a"></i></div>
<div class="n" style="left:1254.0px;top:555.4px;width:15.0px;height:12.6px"><i style="height:3.9px;--c:#5a8a5a"></i></div>
<div class="n" style="left:1275.0px;top:555.4px;width:15.0px;height:7.2px"><i style="height:4.1px;--c:#9a14a0"></i></div>
<div class="n" style="left:1232.0px;top:586.0px;width:15.0px;height:6.8px"><i style="height:3.9px;--c:#a08a14"></i></div>
<div class="n" style="left:1224.0px;top:592.0px;width:15.0px;height:6.8px"><i style="height:3.9px;--c:#6414c0"></i></div>
<div class="n" style="left:1236.2px;top:598.7px;width:15.0px;height:6.8px"><i style="height:3.9px;--c:#a8107a"></i></div>
<div class="n" style="left:1254.0px;top:584.1px;width:15.0px;height:12.6px"><i style="height:3.9px;--c:#5a8a5a"></i></div>
<div class="n" style="left:1275.0px;top:584.1px;width:15.0px;height:7.2px"><i style="height:4.1px;--c:#9a14a0"></i></div>
<div class="n" style="left:1235.0px;top:614.9px;width:15.0px;height:6.8px"><i style="height:3.9px;--c:#a08a14"></i></div>
<div class="n" style="left:1227.0px;top:621.0px;width:15.0px;height:6.8px"><i style="height:3.9px;--c:#6414c0"></i></div>
<div class="n" style="left:1236.2px;top:627.8px;width:15.0px;height:6.8px"><i style="height:3.9px;--c:#a8107a"></i></div>
<div class="n" style="left:1254.0px;top:613.0px;width:15.0px;height:12.6px"><i style="height:3.9px;--c:#5a8a5a"></i></div>
<div class="n" style="left:1275.0px;top:613.0px;width:15.0px;height:7.2px"><i style="height:4.1px;--c:#9a14a0"></i></div>
<div class="n" style="left:1376.0px;top:452.9px;width:14.8px;height:6.5px"><i style="height:3.1px;--c:#9a14a0"></i></div>
<div class="n" style="left:1376.0px;top:459.4px;width:14.8px;height:6.5px"><i style="height:3.1px;--c:#9a14a0"></i></div>
<div class="n" style="left:1376.0px;top:466.0px;width:14.8px;height:6.5px"><i style="height:3.1px;--c:#9a14a0"></i></div>
<div class="n" style="left:1376.0px;top:472.5px;width:14.8px;height:6.5px"><i style="height:3.1px;--c:#9a14a0"></i></div>
<div class="n" style="left:1376.0px;top:479.1px;width:14.8px;height:6.5px"><i style="height:3.1px;--c:#9a14a0"></i></div>
<div class="n" style="left:1376.0px;top:485.6px;width:14.8px;height:6.5px"><i style="height:3.1px;--c:#9a14a0"></i></div>
<div class="n" style="left:1376.0px;top:492.1px;width:14.8px;height:6.5px"><i style="height:3.1px;--c:#9a14a0"></i></div>
<div class="n" style="left:1376.0px;top:498.7px;width:14.8px;height:6.5px"><i style="height:3.1px;--c:#9a14a0"></i></div>
<div class="n" style="left:1376.0px;top:505.2px;width:14.8px;height:6.5px"><i style="height:3.1px;--c:#9a14a0"></i></div>
<div class="n" style="left:1442.9px;top:486.9px;width:15.1px;height:6.4px"><i style="height:3.1px;--c:#9a14a0"></i></div>
<div class="n" style="left:1442.9px;top:493.3px;width:15.1px;height:6.4px"><i style="height:3.1px;--c:#7a1aa8"></i></div>
<div class="n" style="left:1442.9px;top:499.8px;width:15.1px;height:6.4px"><i style="height:3.1px;--c:#a0a014"></i></div>
<div class="n" style="left:1442.9px;top:506.2px;width:15.1px;height:6.4px"><i style="height:3.1px;--c:#9a14a0"></i></div>
<div class="n" style="left:1442.9px;top:512.7px;width:15.1px;height:6.4px"><i style="height:3.1px;--c:#8a9a14"></i></div>
<div class="n" style="left:1442.9px;top:519.1px;width:15.1px;height:6.4px"><i style="height:3.1px;--c:#6414c0"></i></div>
<div class="n" style="left:1442.9px;top:525.5px;width:15.1px;height:6.4px"><i style="height:3.1px;--c:#8a1aa0"></i></div>
<div class="n" style="left:1442.9px;top:532.0px;width:15.1px;height:6.4px"><i style="height:3.1px;--c:#a8107a"></i></div>
<div class="n" style="left:1442.9px;top:538.4px;width:15.1px;height:6.4px"><i style="height:3.1px;--c:#17a0a0"></i></div>
<div class="n" style="left:1407.9px;top:470.9px;width:15.1px;height:29.1px"><i style="height:3.1px;--c:#5a8a5a"></i></div>
<div class="n" style="left:1480.0px;top:498.0px;width:15.0px;height:29.0px"><i style="height:3.1px;--c:#5a8a5a"></i></div>
<div class="n" style="left:1512.0px;top:470.9px;width:15.0px;height:61.1px"><i style="height:3.1px;--c:#8a7058"></i></div>
<svg width="1546" height="869" style="position:absolute;left:0;top:0"><ellipse cx="81.90" cy="385.65" rx="1.10" ry="0.75" fill="#f2f2f2"/><ellipse cx="81.80" cy="388.10" rx="0.60" ry="0.60" fill="#d01010"/><ellipse cx="81.80" cy="391.10" rx="0.60" ry="0.60" fill="#10c010"/><ellipse cx="81.80" cy="394.10" rx="0.60" ry="0.60" fill="#1010d0"/><ellipse cx="81.80" cy="396.50" rx="0.60" ry="0.60" fill="#999"/><ellipse cx="81.80" cy="399.10" rx="0.60" ry="0.60" fill="#f2f2f2"/><ellipse cx="110.65" cy="389.90" rx="0.65" ry="1.10" fill="#f2f2f2"/><ellipse cx="140.70" cy="385.15" rx="1.10" ry="0.75" fill="#f2f2f2"/><ellipse cx="160.00" cy="385.50" rx="1.00" ry="0.75" fill="#f2f2f2"/><ellipse cx="170.85" cy="385.40" rx="0.65" ry="0.65" fill="#ccc"/><ellipse cx="202.70" cy="385.15" rx="1.10" ry="0.75" fill="#f2f2f2"/><ellipse cx="234.65" cy="389.90" rx="0.65" ry="1.10" fill="#f2f2f2"/><ellipse cx="265.70" cy="385.15" rx="1.10" ry="0.75" fill="#f2f2f2"/><ellipse cx="270.00" cy="394.94" rx="1.00" ry="0.75" fill="#f2f2f2"/><ellipse cx="280.85" cy="394.84" rx="0.65" ry="0.65" fill="#ccc"/><ellipse cx="81.90" cy="411.25" rx="1.10" ry="0.75" fill="#f2f2f2"/><ellipse cx="81.80" cy="413.70" rx="0.60" ry="0.60" fill="#d01010"/><ellipse cx="81.80" cy="416.70" rx="0.60" ry="0.60" fill="#10c010"/><ellipse cx="81.80" cy="419.70" rx="0.60" ry="0.60" fill="#1010d0"/><ellipse cx="81.80" cy="422.10" rx="0.60" ry="0.60" fill="#999"/><ellipse cx="81.80" cy="424.70" rx="0.60" ry="0.60" fill="#f2f2f2"/><ellipse cx="110.65" cy="415.50" rx="0.65" ry="1.10" fill="#f2f2f2"/><ellipse cx="140.70" cy="410.75" rx="1.10" ry="0.75" fill="#f2f2f2"/><ellipse cx="160.00" cy="411.10" rx="1.00" ry="0.75" fill="#f2f2f2"/><ellipse cx="170.85" cy="411.00" rx="0.65" ry="0.65" fill="#ccc"/><ellipse cx="202.70" cy="410.75" rx="1.10" ry="0.75" fill="#f2f2f2"/><ellipse cx="234.65" cy="415.50" rx="0.65" ry="1.10" fill="#f2f2f2"/><ellipse cx="265.70" cy="410.75" rx="1.10" ry="0.75" fill="#f2f2f2"/><ellipse cx="270.00" cy="420.54" rx="1.00" ry="0.75" fill="#f2f2f2"/><ellipse cx="280.85" cy="420.44" rx="0.65" ry="0.65" fill="#ccc"/><ellipse cx="81.90" cy="436.85" rx="1.10" ry="0.75" fill="#f2f2f2"/><ellipse cx="81.80" cy="439.30" rx="0.60" ry="0.60" fill="#d01010"/><ellipse cx="81.80" cy="442.30" rx="0.60" ry="0.60" fill="#10c010"/><ellipse cx="81.80" cy="445.30" rx="0.60" ry="0.60" fill="#1010d0"/><ellipse cx="81.80" cy="447.70" rx="0.60" ry="0.60" fill="#999"/><ellipse cx="81.80" cy="450.30" rx="0.60" ry="0.60" fill="#f2f2f2"/><ellipse cx="110.65" cy="441.10" rx="0.65" ry="1.10" fill="#f2f2f2"/><ellipse cx="140.70" cy="436.35" rx="1.10" ry="0.75" fill="#f2f2f2"/><ellipse cx="160.00" cy="436.70" rx="1.00" ry="0.75" fill="#f2f2f2"/><ellipse cx="170.85" cy="436.60" rx="0.65" ry="0.65" fill="#ccc"/><ellipse cx="202.70" cy="436.35" rx="1.10" ry="0.75" fill="#f2f2f2"/><ellipse cx="234.65" cy="441.10" rx="0.65" ry="1.10" fill="#f2f2f2"/><ellipse cx="265.70" cy="436.35" rx="1.10" ry="0.75" fill="#f2f2f2"/><ellipse cx="270.00" cy="446.14" rx="1.00" ry="0.75" fill="#f2f2f2"/><ellipse cx="280.85" cy="446.04" rx="0.65" ry="0.65" fill="#ccc"/><ellipse cx="81.90" cy="462.45" rx="1.10" ry="0.75" fill="#f2f2f2"/><ellipse cx="81.80" cy="464.90" rx="0.60" ry="0.60" fill="#d01010"/><ellipse cx="81.80" cy="467.90" rx="0.60" ry="0.60" fill="#10c010"/><ellipse cx="81.80" cy="470.90" rx="0.60" ry="0.60" fill="#1010d0"/><ellipse cx="81.80" cy="473.30" rx="0.60" ry="0.60" fill="#999"/><ellipse cx="81.80" cy="475.90" rx="0.60" ry="0.60" fill="#f2f2f2"/><ellipse cx="110.65" cy="466.70" rx="0.65" ry="1.10" fill="#f2f2f2"/><ellipse cx="140.70" cy="461.95" rx="1.10" ry="0.75" fill="#f2f2f2"/><ellipse cx="160.00" cy="462.30" rx="1.00" ry="0.75" fill="#f2f2f2"/><ellipse cx="170.85" cy="462.20" rx="0.65" ry="0.65" fill="#ccc"/><ellipse cx="202.70" cy="461.95" rx="1.10" ry="0.75" fill="#f2f2f2"/><ellipse cx="234.65" cy="466.70" rx="0.65" ry="1.10" fill="#f2f2f2"/><ellipse cx="265.70" cy="461.95" rx="1.10" ry="0.75" fill="#f2f2f2"/><ellipse cx="270.00" cy="471.74" rx="1.00" ry="0.75" fill="#f2f2f2"/><ellipse cx="280.85" cy="471.64" rx="0.65" ry="0.65" fill="#ccc"/><ellipse cx="81.90" cy="488.05" rx="1.10" ry="0.75" fill="#f2f2f2"/><ellipse cx="81.80" cy="490.50" rx="0.60" ry="0.60" fill="#d01010"/><ellipse cx="81.80" cy="493.50" rx="0.60" ry="0.60" fill="#10c010"/><ellipse cx="81.80" cy="496.50" rx="0.60" ry="0.60" fill="#1010d0"/><ellipse cx="81.80" cy="498.90" rx="0.60" ry="0.60" fill="#999"/><ellipse cx="81.80" cy="501.50" rx="0.60" ry="0.60" fill="#f2f2f2"/><ellipse cx="110.65" cy="492.30" rx="0.65" ry="1.10" fill="#f2f2f2"/><ellipse cx="140.70" cy="487.55" rx="1.10" ry="0.75" fill="#f2f2f2"/><ellipse cx="160.00" cy="487.90" rx="1.00" ry="0.75" fill="#f2f2f2"/><ellipse cx="170.85" cy="487.80" rx="0.65" ry="0.65" fill="#ccc"/><ellipse cx="202.70" cy="487.55" rx="1.10" ry="0.75" fill="#f2f2f2"/><ellipse cx="234.65" cy="492.30" rx="0.65" ry="1.10" fill="#f2f2f2"/><ellipse cx="265.70" cy="487.55" rx="1.10" ry="0.75" fill="#f2f2f2"/><ellipse cx="274.00" cy="487.34" rx="1.00" ry="0.75" fill="#f2f2f2"/><ellipse cx="284.85" cy="487.24" rx="0.65" ry="0.65" fill="#ccc"/><ellipse cx="81.90" cy="513.65" rx="1.10" ry="0.75" fill="#f2f2f2"/><ellipse cx="81.80" cy="516.10" rx="0.60" ry="0.60" fill="#d01010"/><ellipse cx="81.80" cy="519.10" rx="0.60" ry="0.60" fill="#10c010"/><ellipse cx="81.80" cy="522.10" rx="0.60" ry="0.60" fill="#1010d0"/><ellipse cx="81.80" cy="524.50" rx="0.60" ry="0.60" fill="#999"/><ellipse cx="81.80" cy="527.10" rx="0.60" ry="0.60" fill="#f2f2f2"/><ellipse cx="110.65" cy="517.90" rx="0.65" ry="1.10" fill="#f2f2f2"/><ellipse cx="140.70" cy="513.15" rx="1.10" ry="0.75" fill="#f2f2f2"/><ellipse cx="160.00" cy="513.50" rx="1.00" ry="0.75" fill="#f2f2f2"/><ellipse cx="170.85" cy="513.40" rx="0.65" ry="0.65" fill="#ccc"/><ellipse cx="202.70" cy="513.15" rx="1.10" ry="0.75" fill="#f2f2f2"/><ellipse cx="234.65" cy="517.90" rx="0.65" ry="1.10" fill="#f2f2f2"/><ellipse cx="265.70" cy="513.15" rx="1.10" ry="0.75" fill="#f2f2f2"/><ellipse cx="274.00" cy="512.94" rx="1.00" ry="0.75" fill="#f2f2f2"/><ellipse cx="284.85" cy="512.84" rx="0.65" ry="0.65" fill="#ccc"/><ellipse cx="81.90" cy="539.25" rx="1.10" ry="0.75" fill="#f2f2f2"/><ellipse cx="81.80" cy="541.70" rx="0.60" ry="0.60" fill="#d01010"/><ellipse cx="81.80" cy="544.70" rx="0.60" ry="0.60" fill="#10c010"/><ellipse cx="81.80" cy="547.70" rx="0.60" ry="0.60" fill="#1010d0"/><ellipse cx="81.80" cy="550.10" rx="0.60" ry="0.60" fill="#999"/><ellipse cx="81.80" cy="552.70" rx="0.60" ry="0.60" fill="#f2f2f2"/><ellipse cx="110.65" cy="543.50" rx="0.65" ry="1.10" fill="#f2f2f2"/><ellipse cx="140.70" cy="538.75" rx="1.10" ry="0.75" fill="#f2f2f2"/><ellipse cx="160.00" cy="539.10" rx="1.00" ry="0.75" fill="#f2f2f2"/><ellipse cx="170.85" cy="539.00" rx="0.65" ry="0.65" fill="#ccc"/><ellipse cx="202.70" cy="538.75" rx="1.10" ry="0.75" fill="#f2f2f2"/><ellipse cx="234.65" cy="543.50" rx="0.65" ry="1.10" fill="#f2f2f2"/><ellipse cx="265.70" cy="538.75" rx="1.10" ry="0.75" fill="#f2f2f2"/><ellipse cx="274.00" cy="538.54" rx="1.00" ry="0.75" fill="#f2f2f2"/><ellipse cx="284.85" cy="538.44" rx="0.65" ry="0.65" fill="#ccc"/><ellipse cx="81.90" cy="564.85" rx="1.10" ry="0.75" fill="#f2f2f2"/><ellipse cx="81.80" cy="567.30" rx="0.60" ry="0.60" fill="#d01010"/><ellipse cx="81.80" cy="570.30" rx="0.60" ry="0.60" fill="#10c010"/><ellipse cx="81.80" cy="573.30" rx="0.60" ry="0.60" fill="#1010d0"/><ellipse cx="81.80" cy="575.70" rx="0.60" ry="0.60" fill="#999"/><ellipse cx="81.80" cy="578.30" rx="0.60" ry="0.60" fill="#f2f2f2"/><ellipse cx="110.65" cy="569.10" rx="0.65" ry="1.10" fill="#f2f2f2"/><ellipse cx="140.70" cy="564.35" rx="1.10" ry="0.75" fill="#f2f2f2"/><ellipse cx="160.00" cy="564.70" rx="1.00" ry="0.75" fill="#f2f2f2"/><ellipse cx="170.85" cy="564.60" rx="0.65" ry="0.65" fill="#ccc"/><ellipse cx="202.70" cy="564.35" rx="1.10" ry="0.75" fill="#f2f2f2"/><ellipse cx="234.65" cy="569.10" rx="0.65" ry="1.10" fill="#f2f2f2"/><ellipse cx="265.70" cy="564.35" rx="1.10" ry="0.75" fill="#f2f2f2"/><ellipse cx="274.00" cy="564.14" rx="1.00" ry="0.75" fill="#f2f2f2"/><ellipse cx="284.85" cy="564.04" rx="0.65" ry="0.65" fill="#ccc"/><ellipse cx="81.90" cy="590.45" rx="1.10" ry="0.75" fill="#f2f2f2"/><ellipse cx="81.80" cy="592.90" rx="0.60" ry="0.60" fill="#d01010"/><ellipse cx="81.80" cy="595.90" rx="0.60" ry="0.60" fill="#10c010"/><ellipse cx="81.80" cy="598.90" rx="0.60" ry="0.60" fill="#1010d0"/><ellipse cx="81.80" cy="601.30" rx="0.60" ry="0.60" fill="#999"/><ellipse cx="81.80" cy="603.90" rx="0.60" ry="0.60" fill="#f2f2f2"/><ellipse cx="110.65" cy="594.70" rx="0.65" ry="1.10" fill="#f2f2f2"/><ellipse cx="140.70" cy="589.95" rx="1.10" ry="0.75" fill="#f2f2f2"/><ellipse cx="160.00" cy="590.30" rx="1.00" ry="0.75" fill="#f2f2f2"/><ellipse cx="170.85" cy="590.20" rx="0.65" ry="0.65" fill="#ccc"/><ellipse cx="202.70" cy="589.95" rx="1.10" ry="0.75" fill="#f2f2f2"/><ellipse cx="234.65" cy="594.70" rx="0.65" ry="1.10" fill="#f2f2f2"/><ellipse cx="265.70" cy="589.95" rx="1.10" ry="0.75" fill="#f2f2f2"/><ellipse cx="274.00" cy="589.74" rx="1.00" ry="0.75" fill="#f2f2f2"/><ellipse cx="284.85" cy="589.64" rx="0.65" ry="0.65" fill="#ccc"/><ellipse cx="24.00" cy="496.30" rx="1.00" ry="0.80" fill="#f0f0f0"/><ellipse cx="392.90" cy="389.45" rx="1.10" ry="0.75" fill="#f2f2f2"/><ellipse cx="392.80" cy="391.90" rx="0.60" ry="0.60" fill="#d01010"/><ellipse cx="392.80" cy="394.90" rx="0.60" ry="0.60" fill="#10c010"/><ellipse cx="392.80" cy="397.90" rx="0.60" ry="0.60" fill="#1010d0"/><ellipse cx="392.80" cy="400.30" rx="0.60" ry="0.60" fill="#999"/><ellipse cx="392.80" cy="402.90" rx="0.60" ry="0.60" fill="#f2f2f2"/><ellipse cx="420.65" cy="393.10" rx="0.65" ry="1.10" fill="#f2f2f2"/><ellipse cx="445.80" cy="401.10" rx="1.00" ry="0.75" fill="#f2f2f2"/><ellipse cx="460.70" cy="388.95" rx="1.10" ry="0.75" fill="#f2f2f2"/><ellipse cx="471.00" cy="388.58" rx="1.00" ry="0.75" fill="#f2f2f2"/><ellipse cx="481.85" cy="388.48" rx="0.65" ry="0.65" fill="#ccc"/><ellipse cx="392.90" cy="415.05" rx="1.10" ry="0.75" fill="#f2f2f2"/><ellipse cx="392.80" cy="417.50" rx="0.60" ry="0.60" fill="#d01010"/><ellipse cx="392.80" cy="420.50" rx="0.60" ry="0.60" fill="#10c010"/><ellipse cx="392.80" cy="423.50" rx="0.60" ry="0.60" fill="#1010d0"/><ellipse cx="392.80" cy="425.90" rx="0.60" ry="0.60" fill="#999"/><ellipse cx="392.80" cy="428.50" rx="0.60" ry="0.60" fill="#f2f2f2"/><ellipse cx="420.65" cy="418.70" rx="0.65" ry="1.10" fill="#f2f2f2"/><ellipse cx="445.80" cy="426.70" rx="1.00" ry="0.75" fill="#f2f2f2"/><ellipse cx="460.70" cy="414.55" rx="1.10" ry="0.75" fill="#f2f2f2"/><ellipse cx="471.00" cy="414.18" rx="1.00" ry="0.75" fill="#f2f2f2"/><ellipse cx="481.85" cy="414.08" rx="0.65" ry="0.65" fill="#ccc"/><ellipse cx="392.90" cy="440.65" rx="1.10" ry="0.75" fill="#f2f2f2"/><ellipse cx="392.80" cy="443.10" rx="0.60" ry="0.60" fill="#d01010"/><ellipse cx="392.80" cy="446.10" rx="0.60" ry="0.60" fill="#10c010"/><ellipse cx="392.80" cy="449.10" rx="0.60" ry="0.60" fill="#1010d0"/><ellipse cx="392.80" cy="451.50" rx="0.60" ry="0.60" fill="#999"/><ellipse cx="392.80" cy="454.10" rx="0.60" ry="0.60" fill="#f2f2f2"/><ellipse cx="420.65" cy="444.30" rx="0.65" ry="1.10" fill="#f2f2f2"/><ellipse cx="445.80" cy="452.30" rx="1.00" ry="0.75" fill="#f2f2f2"/><ellipse cx="460.70" cy="440.15" rx="1.10" ry="0.75" fill="#f2f2f2"/><ellipse cx="471.00" cy="439.78" rx="1.00" ry="0.75" fill="#f2f2f2"/><ellipse cx="481.85" cy="439.68" rx="0.65" ry="0.65" fill="#ccc"/><ellipse cx="392.90" cy="466.25" rx="1.10" ry="0.75" fill="#f2f2f2"/><ellipse cx="392.80" cy="468.70" rx="0.60" ry="0.60" fill="#d01010"/><ellipse cx="392.80" cy="471.70" rx="0.60" ry="0.60" fill="#10c010"/><ellipse cx="392.80" cy="474.70" rx="0.60" ry="0.60" fill="#1010d0"/><ellipse cx="392.80" cy="477.10" rx="0.60" ry="0.60" fill="#999"/><ellipse cx="392.80" cy="479.70" rx="0.60" ry="0.60" fill="#f2f2f2"/><ellipse cx="420.65" cy="469.90" rx="0.65" ry="1.10" fill="#f2f2f2"/><ellipse cx="445.80" cy="477.90" rx="1.00" ry="0.75" fill="#f2f2f2"/><ellipse cx="460.70" cy="465.75" rx="1.10" ry="0.75" fill="#f2f2f2"/><ellipse cx="471.00" cy="465.38" rx="1.00" ry="0.75" fill="#f2f2f2"/><ellipse cx="481.85" cy="465.28" rx="0.65" ry="0.65" fill="#ccc"/><ellipse cx="392.90" cy="491.85" rx="1.10" ry="0.75" fill="#f2f2f2"/><ellipse cx="392.80" cy="494.30" rx="0.60" ry="0.60" fill="#d01010"/><ellipse cx="392.80" cy="497.30" rx="0.60" ry="0.60" fill="#10c010"/><ellipse cx="392.80" cy="500.30" rx="0.60" ry="0.60" fill="#1010d0"/><ellipse cx="392.80" cy="502.70" rx="0.60" ry="0.60" fill="#999"/><ellipse cx="392.80" cy="505.30" rx="0.60" ry="0.60" fill="#f2f2f2"/><ellipse cx="420.65" cy="495.50" rx="0.65" ry="1.10" fill="#f2f2f2"/><ellipse cx="445.80" cy="503.50" rx="1.00" ry="0.75" fill="#f2f2f2"/><ellipse cx="460.70" cy="491.35" rx="1.10" ry="0.75" fill="#f2f2f2"/><ellipse cx="471.00" cy="490.98" rx="1.00" ry="0.75" fill="#f2f2f2"/><ellipse cx="481.85" cy="490.88" rx="0.65" ry="0.65" fill="#ccc"/><ellipse cx="392.90" cy="517.45" rx="1.10" ry="0.75" fill="#f2f2f2"/><ellipse cx="392.80" cy="519.90" rx="0.60" ry="0.60" fill="#d01010"/><ellipse cx="392.80" cy="522.90" rx="0.60" ry="0.60" fill="#10c010"/><ellipse cx="392.80" cy="525.90" rx="0.60" ry="0.60" fill="#1010d0"/><ellipse cx="392.80" cy="528.30" rx="0.60" ry="0.60" fill="#999"/><ellipse cx="392.80" cy="530.90" rx="0.60" ry="0.60" fill="#f2f2f2"/><ellipse cx="420.65" cy="521.10" rx="0.65" ry="1.10" fill="#f2f2f2"/><ellipse cx="445.80" cy="529.10" rx="1.00" ry="0.75" fill="#f2f2f2"/><ellipse cx="460.70" cy="516.95" rx="1.10" ry="0.75" fill="#f2f2f2"/><ellipse cx="471.00" cy="516.58" rx="1.00" ry="0.75" fill="#f2f2f2"/><ellipse cx="481.85" cy="516.48" rx="0.65" ry="0.65" fill="#ccc"/><ellipse cx="392.90" cy="543.05" rx="1.10" ry="0.75" fill="#f2f2f2"/><ellipse cx="392.80" cy="545.50" rx="0.60" ry="0.60" fill="#d01010"/><ellipse cx="392.80" cy="548.50" rx="0.60" ry="0.60" fill="#10c010"/><ellipse cx="392.80" cy="551.50" rx="0.60" ry="0.60" fill="#1010d0"/><ellipse cx="392.80" cy="553.90" rx="0.60" ry="0.60" fill="#999"/><ellipse cx="392.80" cy="556.50" rx="0.60" ry="0.60" fill="#f2f2f2"/><ellipse cx="420.65" cy="546.70" rx="0.65" ry="1.10" fill="#f2f2f2"/><ellipse cx="445.80" cy="554.70" rx="1.00" ry="0.75" fill="#f2f2f2"/><ellipse cx="460.70" cy="542.55" rx="1.10" ry="0.75" fill="#f2f2f2"/><ellipse cx="471.00" cy="542.18" rx="1.00" ry="0.75" fill="#f2f2f2"/><ellipse cx="481.85" cy="542.08" rx="0.65" ry="0.65" fill="#ccc"/><ellipse cx="392.90" cy="568.65" rx="1.10" ry="0.75" fill="#f2f2f2"/><ellipse cx="392.80" cy="571.10" rx="0.60" ry="0.60" fill="#d01010"/><ellipse cx="392.80" cy="574.10" rx="0.60" ry="0.60" fill="#10c010"/><ellipse cx="392.80" cy="577.10" rx="0.60" ry="0.60" fill="#1010d0"/><ellipse cx="392.80" cy="579.50" rx="0.60" ry="0.60" fill="#999"/><ellipse cx="392.80" cy="582.10" rx="0.60" ry="0.60" fill="#f2f2f2"/><ellipse cx="420.65" cy="572.30" rx="0.65" ry="1.10" fill="#f2f2f2"/><ellipse cx="445.80" cy="580.30" rx="1.00" ry="0.75" fill="#f2f2f2"/><ellipse cx="460.70" cy="568.15" rx="1.10" ry="0.75" fill="#f2f2f2"/><ellipse cx="471.00" cy="567.78" rx="1.00" ry="0.75" fill="#f2f2f2"/><ellipse cx="481.85" cy="567.68" rx="0.65" ry="0.65" fill="#ccc"/><ellipse cx="392.90" cy="594.25" rx="1.10" ry="0.75" fill="#f2f2f2"/><ellipse cx="392.80" cy="596.70" rx="0.60" ry="0.60" fill="#d01010"/><ellipse cx="392.80" cy="599.70" rx="0.60" ry="0.60" fill="#10c010"/><ellipse cx="392.80" cy="602.70" rx="0.60" ry="0.60" fill="#1010d0"/><ellipse cx="392.80" cy="605.10" rx="0.60" ry="0.60" fill="#999"/><ellipse cx="392.80" cy="607.70" rx="0.60" ry="0.60" fill="#f2f2f2"/><ellipse cx="420.65" cy="597.90" rx="0.65" ry="1.10" fill="#f2f2f2"/><ellipse cx="445.80" cy="605.90" rx="1.00" ry="0.75" fill="#f2f2f2"/><ellipse cx="460.70" cy="593.75" rx="1.10" ry="0.75" fill="#f2f2f2"/><ellipse cx="471.00" cy="593.38" rx="1.00" ry="0.75" fill="#f2f2f2"/><ellipse cx="481.85" cy="593.28" rx="0.65" ry="0.65" fill="#ccc"/><ellipse cx="352.00" cy="494.80" rx="1.00" ry="0.80" fill="#f0f0f0"/><ellipse cx="562.00" cy="392.30" rx="0.90" ry="0.80" fill="#f2f2f2"/><ellipse cx="596.90" cy="390.65" rx="1.10" ry="0.75" fill="#f2f2f2"/><ellipse cx="596.80" cy="393.10" rx="0.60" ry="0.60" fill="#d01010"/><ellipse cx="596.80" cy="396.10" rx="0.60" ry="0.60" fill="#10c010"/><ellipse cx="596.80" cy="399.10" rx="0.60" ry="0.60" fill="#1010d0"/><ellipse cx="596.80" cy="401.50" rx="0.60" ry="0.60" fill="#999"/><ellipse cx="596.80" cy="404.10" rx="0.60" ry="0.60" fill="#f2f2f2"/><ellipse cx="628.70" cy="390.85" rx="1.10" ry="0.75" fill="#f2f2f2"/><ellipse cx="649.70" cy="390.85" rx="1.10" ry="0.75" fill="#f2f2f2"/><ellipse cx="638.85" cy="390.85" rx="0.65" ry="0.75" fill="#f2f2f2"/><ellipse cx="659.00" cy="391.10" rx="1.00" ry="0.75" fill="#f2f2f2"/><ellipse cx="669.85" cy="391.00" rx="0.65" ry="0.65" fill="#ccc"/><ellipse cx="561.10" cy="423.50" rx="0.90" ry="0.80" fill="#f2f2f2"/><ellipse cx="596.90" cy="421.85" rx="1.10" ry="0.75" fill="#f2f2f2"/><ellipse cx="596.80" cy="424.30" rx="0.60" ry="0.60" fill="#d01010"/><ellipse cx="596.80" cy="427.30" rx="0.60" ry="0.60" fill="#10c010"/><ellipse cx="596.80" cy="430.30" rx="0.60" ry="0.60" fill="#1010d0"/><ellipse cx="596.80" cy="432.70" rx="0.60" ry="0.60" fill="#999"/><ellipse cx="596.80" cy="435.30" rx="0.60" ry="0.60" fill="#f2f2f2"/><ellipse cx="628.70" cy="422.05" rx="1.10" ry="0.75" fill="#f2f2f2"/><ellipse cx="648.70" cy="422.05" rx="1.10" ry="0.75" fill="#f2f2f2"/><ellipse cx="637.85" cy="422.05" rx="0.65" ry="0.75" fill="#f2f2f2"/><ellipse cx="659.00" cy="422.30" rx="1.00" ry="0.75" fill="#f2f2f2"/><ellipse cx="669.85" cy="422.20" rx="0.65" ry="0.65" fill="#ccc"/><ellipse cx="561.10" cy="453.70" rx="0.90" ry="0.80" fill="#f2f2f2"/><ellipse cx="596.90" cy="452.05" rx="1.10" ry="0.75" fill="#f2f2f2"/><ellipse cx="596.80" cy="454.50" rx="0.60" ry="0.60" fill="#d01010"/><ellipse cx="596.80" cy="457.50" rx="0.60" ry="0.60" fill="#10c010"/><ellipse cx="596.80" cy="460.50" rx="0.60" ry="0.60" fill="#1010d0"/><ellipse cx="596.80" cy="462.90" rx="0.60" ry="0.60" fill="#999"/><ellipse cx="596.80" cy="465.50" rx="0.60" ry="0.60" fill="#f2f2f2"/><ellipse cx="628.70" cy="452.25" rx="1.10" ry="0.75" fill="#f2f2f2"/><ellipse cx="648.70" cy="452.25" rx="1.10" ry="0.75" fill="#f2f2f2"/><ellipse cx="637.85" cy="452.25" rx="0.65" ry="0.75" fill="#f2f2f2"/><ellipse cx="659.00" cy="452.50" rx="1.00" ry="0.75" fill="#f2f2f2"/><ellipse cx="669.85" cy="452.40" rx="0.65" ry="0.65" fill="#ccc"/><ellipse cx="561.10" cy="484.40" rx="0.90" ry="0.80" fill="#f2f2f2"/><ellipse cx="596.90" cy="482.75" rx="1.10" ry="0.75" fill="#f2f2f2"/><ellipse cx="596.80" cy="485.20" rx="0.60" ry="0.60" fill="#d01010"/><ellipse cx="596.80" cy="488.20" rx="0.60" ry="0.60" fill="#10c010"/><ellipse cx="596.80" cy="491.20" rx="0.60" ry="0.60" fill="#1010d0"/><ellipse cx="596.80" cy="493.60" rx="0.60" ry="0.60" fill="#999"/><ellipse cx="596.80" cy="496.20" rx="0.60" ry="0.60" fill="#f2f2f2"/><ellipse cx="628.70" cy="482.95" rx="1.10" ry="0.75" fill="#f2f2f2"/><ellipse cx="648.70" cy="482.95" rx="1.10" ry="0.75" fill="#f2f2f2"/><ellipse cx="637.85" cy="482.95" rx="0.65" ry="0.75" fill="#f2f2f2"/><ellipse cx="659.00" cy="483.20" rx="1.00" ry="0.75" fill="#f2f2f2"/><ellipse cx="669.85" cy="483.10" rx="0.65" ry="0.65" fill="#ccc"/><ellipse cx="561.10" cy="512.60" rx="0.90" ry="0.80" fill="#f2f2f2"/><ellipse cx="596.90" cy="510.95" rx="1.10" ry="0.75" fill="#f2f2f2"/><ellipse cx="596.80" cy="513.40" rx="0.60" ry="0.60" fill="#d01010"/><ellipse cx="596.80" cy="516.40" rx="0.60" ry="0.60" fill="#10c010"/><ellipse cx="596.80" cy="519.40" rx="0.60" ry="0.60" fill="#1010d0"/><ellipse cx="596.80" cy="521.80" rx="0.60" ry="0.60" fill="#999"/><ellipse cx="596.80" cy="524.40" rx="0.60" ry="0.60" fill="#f2f2f2"/><ellipse cx="628.70" cy="511.15" rx="1.10" ry="0.75" fill="#f2f2f2"/><ellipse cx="648.70" cy="511.15" rx="1.10" ry="0.75" fill="#f2f2f2"/><ellipse cx="637.85" cy="511.15" rx="0.65" ry="0.75" fill="#f2f2f2"/><ellipse cx="659.00" cy="511.40" rx="1.00" ry="0.75" fill="#f2f2f2"/><ellipse cx="669.85" cy="511.30" rx="0.65" ry="0.65" fill="#ccc"/><ellipse cx="561.10" cy="543.80" rx="0.90" ry="0.80" fill="#f2f2f2"/><ellipse cx="596.90" cy="542.15" rx="1.10" ry="0.75" fill="#f2f2f2"/><ellipse cx="596.80" cy="544.60" rx="0.60" ry="0.60" fill="#d01010"/><ellipse cx="596.80" cy="547.60" rx="0.60" ry="0.60" fill="#10c010"/><ellipse cx="596.80" cy="550.60" rx="0.60" ry="0.60" fill="#1010d0"/><ellipse cx="596.80" cy="553.00" rx="0.60" ry="0.60" fill="#999"/><ellipse cx="596.80" cy="555.60" rx="0.60" ry="0.60" fill="#f2f2f2"/><ellipse cx="628.70" cy="542.35" rx="1.10" ry="0.75" fill="#f2f2f2"/><ellipse cx="648.70" cy="542.35" rx="1.10" ry="0.75" fill="#f2f2f2"/><ellipse cx="637.85" cy="542.35" rx="0.65" ry="0.75" fill="#f2f2f2"/><ellipse cx="659.00" cy="542.60" rx="1.00" ry="0.75" fill="#f2f2f2"/><ellipse cx="669.85" cy="542.50" rx="0.65" ry="0.65" fill="#ccc"/><ellipse cx="561.10" cy="573.70" rx="0.90" ry="0.80" fill="#f2f2f2"/><ellipse cx="596.90" cy="572.05" rx="1.10" ry="0.75" fill="#f2f2f2"/><ellipse cx="596.80" cy="574.50" rx="0.60" ry="0.60" fill="#d01010"/><ellipse cx="596.80" cy="577.50" rx="0.60" ry="0.60" fill="#10c010"/><ellipse cx="596.80" cy="580.50" rx="0.60" ry="0.60" fill="#1010d0"/><ellipse cx="596.80" cy="582.90" rx="0.60" ry="0.60" fill="#999"/><ellipse cx="596.80" cy="585.50" rx="0.60" ry="0.60" fill="#f2f2f2"/><ellipse cx="628.70" cy="572.25" rx="1.10" ry="0.75" fill="#f2f2f2"/><ellipse cx="648.70" cy="572.25" rx="1.10" ry="0.75" fill="#f2f2f2"/><ellipse cx="637.85" cy="572.25" rx="0.65" ry="0.75" fill="#f2f2f2"/><ellipse cx="659.00" cy="572.50" rx="1.00" ry="0.75" fill="#f2f2f2"/><ellipse cx="669.85" cy="572.40" rx="0.65" ry="0.65" fill="#ccc"/><ellipse cx="561.10" cy="604.40" rx="0.90" ry="0.80" fill="#f2f2f2"/><ellipse cx="596.90" cy="602.75" rx="1.10" ry="0.75" fill="#f2f2f2"/><ellipse cx="596.80" cy="605.20" rx="0.60" ry="0.60" fill="#d01010"/><ellipse cx="596.80" cy="608.20" rx="0.60" ry="0.60" fill="#10c010"/><ellipse cx="596.80" cy="611.20" rx="0.60" ry="0.60" fill="#1010d0"/><ellipse cx="596.80" cy="613.60" rx="0.60" ry="0.60" fill="#999"/><ellipse cx="596.80" cy="616.20" rx="0.60" ry="0.60" fill="#f2f2f2"/><ellipse cx="628.70" cy="602.95" rx="1.10" ry="0.75" fill="#f2f2f2"/><ellipse cx="648.70" cy="602.95" rx="1.10" ry="0.75" fill="#f2f2f2"/><ellipse cx="637.85" cy="602.95" rx="0.65" ry="0.75" fill="#f2f2f2"/><ellipse cx="659.00" cy="603.20" rx="1.00" ry="0.75" fill="#f2f2f2"/><ellipse cx="669.85" cy="603.10" rx="0.65" ry="0.65" fill="#ccc"/><ellipse cx="561.10" cy="634.60" rx="0.90" ry="0.80" fill="#f2f2f2"/><ellipse cx="596.90" cy="632.95" rx="1.10" ry="0.75" fill="#f2f2f2"/><ellipse cx="596.80" cy="635.40" rx="0.60" ry="0.60" fill="#d01010"/><ellipse cx="596.80" cy="638.40" rx="0.60" ry="0.60" fill="#10c010"/><ellipse cx="596.80" cy="641.40" rx="0.60" ry="0.60" fill="#1010d0"/><ellipse cx="596.80" cy="643.80" rx="0.60" ry="0.60" fill="#999"/><ellipse cx="596.80" cy="646.40" rx="0.60" ry="0.60" fill="#f2f2f2"/><ellipse cx="628.70" cy="633.15" rx="1.10" ry="0.75" fill="#f2f2f2"/><ellipse cx="648.70" cy="633.15" rx="1.10" ry="0.75" fill="#f2f2f2"/><ellipse cx="637.85" cy="633.15" rx="0.65" ry="0.75" fill="#f2f2f2"/><ellipse cx="659.00" cy="633.40" rx="1.00" ry="0.75" fill="#f2f2f2"/><ellipse cx="669.85" cy="633.30" rx="0.65" ry="0.65" fill="#ccc"/><ellipse cx="623.30" cy="646.05" rx="1.00" ry="0.75" fill="#f2f2f2"/><ellipse cx="714.70" cy="390.30" rx="1.00" ry="0.75" fill="#f2f2f2"/><ellipse cx="714.70" cy="398.30" rx="1.00" ry="0.75" fill="#f2f2f2"/><ellipse cx="714.70" cy="406.30" rx="1.00" ry="0.75" fill="#f2f2f2"/><ellipse cx="749.70" cy="390.15" rx="1.10" ry="0.75" fill="#f2f2f2"/><ellipse cx="714.70" cy="421.00" rx="1.00" ry="0.75" fill="#f2f2f2"/><ellipse cx="714.70" cy="429.00" rx="1.00" ry="0.75" fill="#f2f2f2"/><ellipse cx="714.70" cy="437.00" rx="1.00" ry="0.75" fill="#f2f2f2"/><ellipse cx="749.70" cy="420.85" rx="1.10" ry="0.75" fill="#f2f2f2"/><ellipse cx="750.00" cy="414.60" rx="1.00" ry="0.75" fill="#f2f2f2"/><ellipse cx="760.85" cy="414.50" rx="0.65" ry="0.65" fill="#ccc"/><ellipse cx="714.70" cy="450.90" rx="1.00" ry="0.75" fill="#f2f2f2"/><ellipse cx="714.70" cy="458.90" rx="1.00" ry="0.75" fill="#f2f2f2"/><ellipse cx="714.70" cy="466.90" rx="1.00" ry="0.75" fill="#f2f2f2"/><ellipse cx="749.70" cy="450.75" rx="1.10" ry="0.75" fill="#f2f2f2"/><ellipse cx="750.00" cy="444.50" rx="1.00" ry="0.75" fill="#f2f2f2"/><ellipse cx="760.85" cy="444.40" rx="0.65" ry="0.65" fill="#ccc"/><ellipse cx="714.70" cy="482.90" rx="1.00" ry="0.75" fill="#f2f2f2"/><ellipse cx="714.70" cy="490.90" rx="1.00" ry="0.75" fill="#f2f2f2"/><ellipse cx="714.70" cy="498.90" rx="1.00" ry="0.75" fill="#f2f2f2"/><ellipse cx="749.70" cy="482.75" rx="1.10" ry="0.75" fill="#f2f2f2"/><ellipse cx="750.00" cy="476.50" rx="1.00" ry="0.75" fill="#f2f2f2"/><ellipse cx="760.85" cy="476.40" rx="0.65" ry="0.65" fill="#ccc"/><ellipse cx="714.70" cy="515.00" rx="1.00" ry="0.75" fill="#f2f2f2"/><ellipse cx="714.70" cy="523.00" rx="1.00" ry="0.75" fill="#f2f2f2"/><ellipse cx="714.70" cy="531.00" rx="1.00" ry="0.75" fill="#f2f2f2"/><ellipse cx="749.70" cy="514.85" rx="1.10" ry="0.75" fill="#f2f2f2"/><ellipse cx="750.00" cy="508.60" rx="1.00" ry="0.75" fill="#f2f2f2"/><ellipse cx="760.85" cy="508.50" rx="0.65" ry="0.65" fill="#ccc"/><ellipse cx="714.70" cy="549.20" rx="1.00" ry="0.75" fill="#f2f2f2"/><ellipse cx="714.70" cy="557.20" rx="1.00" ry="0.75" fill="#f2f2f2"/><ellipse cx="714.70" cy="565.20" rx="1.00" ry="0.75" fill="#f2f2f2"/><ellipse cx="749.70" cy="549.05" rx="1.10" ry="0.75" fill="#f2f2f2"/><ellipse cx="750.00" cy="542.80" rx="1.00" ry="0.75" fill="#f2f2f2"/><ellipse cx="760.85" cy="542.70" rx="0.65" ry="0.65" fill="#ccc"/><ellipse cx="714.70" cy="581.10" rx="1.00" ry="0.75" fill="#f2f2f2"/><ellipse cx="714.70" cy="589.10" rx="1.00" ry="0.75" fill="#f2f2f2"/><ellipse cx="714.70" cy="597.10" rx="1.00" ry="0.75" fill="#f2f2f2"/><ellipse cx="749.70" cy="580.95" rx="1.10" ry="0.75" fill="#f2f2f2"/><ellipse cx="750.00" cy="574.70" rx="1.00" ry="0.75" fill="#f2f2f2"/><ellipse cx="760.85" cy="574.60" rx="0.65" ry="0.65" fill="#ccc"/><ellipse cx="714.70" cy="614.00" rx="1.00" ry="0.75" fill="#f2f2f2"/><ellipse cx="714.70" cy="622.00" rx="1.00" ry="0.75" fill="#f2f2f2"/><ellipse cx="714.70" cy="630.00" rx="1.00" ry="0.75" fill="#f2f2f2"/><ellipse cx="749.70" cy="613.85" rx="1.10" ry="0.75" fill="#f2f2f2"/><ellipse cx="750.00" cy="607.60" rx="1.00" ry="0.75" fill="#f2f2f2"/><ellipse cx="760.85" cy="607.50" rx="0.65" ry="0.65" fill="#ccc"/><ellipse cx="714.90" cy="646.20" rx="1.00" ry="0.75" fill="#f2f2f2"/><ellipse cx="707.70" cy="656.20" rx="1.00" ry="0.75" fill="#f2f2f2"/><ellipse cx="749.70" cy="645.95" rx="1.10" ry="0.75" fill="#f2f2f2"/><ellipse cx="750.00" cy="640.00" rx="1.00" ry="0.75" fill="#f2f2f2"/><ellipse cx="760.85" cy="639.90" rx="0.65" ry="0.65" fill="#ccc"/><ellipse cx="866.00" cy="300.85" rx="1.00" ry="0.75" fill="#f0f0f0"/><ellipse cx="895.80" cy="301.55" rx="1.10" ry="0.75" fill="#f2f2f2"/><ellipse cx="895.70" cy="304.00" rx="0.60" ry="0.60" fill="#d01010"/><ellipse cx="895.70" cy="307.00" rx="0.60" ry="0.60" fill="#10c010"/><ellipse cx="895.70" cy="310.00" rx="0.60" ry="0.60" fill="#1010d0"/><ellipse cx="895.70" cy="312.40" rx="0.60" ry="0.60" fill="#999"/><ellipse cx="895.70" cy="315.00" rx="0.60" ry="0.60" fill="#f2f2f2"/><ellipse cx="921.50" cy="301.05" rx="1.10" ry="0.75" fill="#f2f2f2"/><ellipse cx="941.70" cy="300.95" rx="1.10" ry="0.75" fill="#f2f2f2"/><ellipse cx="954.50" cy="300.95" rx="1.10" ry="0.75" fill="#f2f2f2"/><ellipse cx="938.80" cy="311.05" rx="0.80" ry="0.75" fill="#e01010"/><ellipse cx="973.60" cy="300.95" rx="1.10" ry="0.75" fill="#f2f2f2"/><ellipse cx="996.70" cy="300.95" rx="1.10" ry="0.75" fill="#f2f2f2"/><ellipse cx="1003.00" cy="300.49" rx="1.00" ry="0.75" fill="#f2f2f2"/><ellipse cx="863.50" cy="382.45" rx="1.00" ry="0.75" fill="#f0f0f0"/><ellipse cx="891.40" cy="382.65" rx="1.10" ry="0.75" fill="#f2f2f2"/><ellipse cx="891.30" cy="385.10" rx="0.60" ry="0.60" fill="#d01010"/><ellipse cx="891.30" cy="388.10" rx="0.60" ry="0.60" fill="#10c010"/><ellipse cx="891.30" cy="391.10" rx="0.60" ry="0.60" fill="#1010d0"/><ellipse cx="891.30" cy="393.50" rx="0.60" ry="0.60" fill="#999"/><ellipse cx="891.30" cy="396.10" rx="0.60" ry="0.60" fill="#f2f2f2"/><ellipse cx="891.40" cy="407.95" rx="0.90" ry="0.75" fill="#f0f0f0"/><ellipse cx="891.25" cy="410.95" rx="0.75" ry="0.75" fill="#c01010"/><ellipse cx="891.25" cy="413.95" rx="0.75" ry="0.75" fill="#10b010"/><ellipse cx="891.25" cy="416.95" rx="0.75" ry="0.75" fill="#1010c0"/><ellipse cx="891.30" cy="428.75" rx="1.00" ry="0.75" fill="#f2f2f2"/><ellipse cx="927.20" cy="382.15" rx="1.10" ry="0.75" fill="#f2f2f2"/><ellipse cx="936.50" cy="381.78" rx="1.00" ry="0.75" fill="#f2f2f2"/><ellipse cx="947.35" cy="381.68" rx="0.65" ry="0.65" fill="#ccc"/><ellipse cx="864.50" cy="445.15" rx="1.00" ry="0.75" fill="#f0f0f0"/><ellipse cx="892.40" cy="445.35" rx="1.10" ry="0.75" fill="#f2f2f2"/><ellipse cx="892.30" cy="447.80" rx="0.60" ry="0.60" fill="#d01010"/><ellipse cx="892.30" cy="450.80" rx="0.60" ry="0.60" fill="#10c010"/><ellipse cx="892.30" cy="453.80" rx="0.60" ry="0.60" fill="#1010d0"/><ellipse cx="892.30" cy="456.20" rx="0.60" ry="0.60" fill="#999"/><ellipse cx="892.30" cy="458.80" rx="0.60" ry="0.60" fill="#f2f2f2"/><ellipse cx="892.40" cy="470.65" rx="0.90" ry="0.75" fill="#f0f0f0"/><ellipse cx="892.25" cy="473.65" rx="0.75" ry="0.75" fill="#c01010"/><ellipse cx="892.25" cy="476.65" rx="0.75" ry="0.75" fill="#10b010"/><ellipse cx="892.25" cy="479.65" rx="0.75" ry="0.75" fill="#1010c0"/><ellipse cx="892.30" cy="491.45" rx="1.00" ry="0.75" fill="#f2f2f2"/><ellipse cx="928.20" cy="444.85" rx="1.10" ry="0.75" fill="#f2f2f2"/><ellipse cx="937.50" cy="444.48" rx="1.00" ry="0.75" fill="#f2f2f2"/><ellipse cx="948.35" cy="444.38" rx="0.65" ry="0.65" fill="#ccc"/><ellipse cx="864.50" cy="507.35" rx="1.00" ry="0.75" fill="#f0f0f0"/><ellipse cx="892.40" cy="507.55" rx="1.10" ry="0.75" fill="#f2f2f2"/><ellipse cx="892.30" cy="510.00" rx="0.60" ry="0.60" fill="#d01010"/><ellipse cx="892.30" cy="513.00" rx="0.60" ry="0.60" fill="#10c010"/><ellipse cx="892.30" cy="516.00" rx="0.60" ry="0.60" fill="#1010d0"/><ellipse cx="892.30" cy="518.40" rx="0.60" ry="0.60" fill="#999"/><ellipse cx="892.30" cy="521.00" rx="0.60" ry="0.60" fill="#f2f2f2"/><ellipse cx="892.40" cy="532.85" rx="0.90" ry="0.75" fill="#f0f0f0"/><ellipse cx="892.25" cy="535.85" rx="0.75" ry="0.75" fill="#c01010"/><ellipse cx="892.25" cy="538.85" rx="0.75" ry="0.75" fill="#10b010"/><ellipse cx="892.25" cy="541.85" rx="0.75" ry="0.75" fill="#1010c0"/><ellipse cx="892.30" cy="553.65" rx="1.00" ry="0.75" fill="#f2f2f2"/><ellipse cx="928.20" cy="507.05" rx="1.10" ry="0.75" fill="#f2f2f2"/><ellipse cx="937.50" cy="506.68" rx="1.00" ry="0.75" fill="#f2f2f2"/><ellipse cx="948.35" cy="506.58" rx="0.65" ry="0.65" fill="#ccc"/><ellipse cx="864.50" cy="569.95" rx="1.00" ry="0.75" fill="#f0f0f0"/><ellipse cx="892.40" cy="570.15" rx="1.10" ry="0.75" fill="#f2f2f2"/><ellipse cx="892.30" cy="572.60" rx="0.60" ry="0.60" fill="#d01010"/><ellipse cx="892.30" cy="575.60" rx="0.60" ry="0.60" fill="#10c010"/><ellipse cx="892.30" cy="578.60" rx="0.60" ry="0.60" fill="#1010d0"/><ellipse cx="892.30" cy="581.00" rx="0.60" ry="0.60" fill="#999"/><ellipse cx="892.30" cy="583.60" rx="0.60" ry="0.60" fill="#f2f2f2"/><ellipse cx="892.40" cy="595.45" rx="0.90" ry="0.75" fill="#f0f0f0"/><ellipse cx="892.25" cy="598.45" rx="0.75" ry="0.75" fill="#c01010"/><ellipse cx="892.25" cy="601.45" rx="0.75" ry="0.75" fill="#10b010"/><ellipse cx="892.25" cy="604.45" rx="0.75" ry="0.75" fill="#1010c0"/><ellipse cx="892.30" cy="616.25" rx="1.00" ry="0.75" fill="#f2f2f2"/><ellipse cx="928.20" cy="569.65" rx="1.10" ry="0.75" fill="#f2f2f2"/><ellipse cx="937.50" cy="569.28" rx="1.00" ry="0.75" fill="#f2f2f2"/><ellipse cx="948.35" cy="569.18" rx="0.65" ry="0.65" fill="#ccc"/><ellipse cx="864.50" cy="632.45" rx="1.00" ry="0.75" fill="#f0f0f0"/><ellipse cx="892.40" cy="632.65" rx="1.10" ry="0.75" fill="#f2f2f2"/><ellipse cx="892.30" cy="635.10" rx="0.60" ry="0.60" fill="#d01010"/><ellipse cx="892.30" cy="638.10" rx="0.60" ry="0.60" fill="#10c010"/><ellipse cx="892.30" cy="641.10" rx="0.60" ry="0.60" fill="#1010d0"/><ellipse cx="892.30" cy="643.50" rx="0.60" ry="0.60" fill="#999"/><ellipse cx="892.30" cy="646.10" rx="0.60" ry="0.60" fill="#f2f2f2"/><ellipse cx="892.40" cy="657.95" rx="0.90" ry="0.75" fill="#f0f0f0"/><ellipse cx="892.25" cy="660.95" rx="0.75" ry="0.75" fill="#c01010"/><ellipse cx="892.25" cy="663.95" rx="0.75" ry="0.75" fill="#10b010"/><ellipse cx="892.25" cy="666.95" rx="0.75" ry="0.75" fill="#1010c0"/><ellipse cx="892.30" cy="678.75" rx="1.00" ry="0.75" fill="#f2f2f2"/><ellipse cx="928.20" cy="632.15" rx="1.10" ry="0.75" fill="#f2f2f2"/><ellipse cx="937.50" cy="631.78" rx="1.00" ry="0.75" fill="#f2f2f2"/><ellipse cx="948.35" cy="631.68" rx="0.65" ry="0.65" fill="#ccc"/><ellipse cx="1013.20" cy="385.45" rx="1.00" ry="0.75" fill="#f0f0f0"/><ellipse cx="1040.30" cy="385.65" rx="1.10" ry="0.75" fill="#f2f2f2"/><ellipse cx="1040.20" cy="388.10" rx="0.60" ry="0.60" fill="#d01010"/><ellipse cx="1040.20" cy="391.10" rx="0.60" ry="0.60" fill="#10c010"/><ellipse cx="1040.20" cy="394.10" rx="0.60" ry="0.60" fill="#1010d0"/><ellipse cx="1040.20" cy="396.50" rx="0.60" ry="0.60" fill="#999"/><ellipse cx="1040.20" cy="399.10" rx="0.60" ry="0.60" fill="#f2f2f2"/><ellipse cx="1040.30" cy="410.95" rx="0.90" ry="0.75" fill="#f0f0f0"/><ellipse cx="1040.15" cy="413.95" rx="0.75" ry="0.75" fill="#c01010"/><ellipse cx="1040.15" cy="416.95" rx="0.75" ry="0.75" fill="#10b010"/><ellipse cx="1040.15" cy="419.95" rx="0.75" ry="0.75" fill="#1010c0"/><ellipse cx="1040.20" cy="431.75" rx="1.00" ry="0.75" fill="#f2f2f2"/><ellipse cx="1076.70" cy="385.15" rx="1.10" ry="0.75" fill="#f2f2f2"/><ellipse cx="1085.00" cy="384.78" rx="1.00" ry="0.75" fill="#f2f2f2"/><ellipse cx="1095.85" cy="384.68" rx="0.65" ry="0.65" fill="#ccc"/><ellipse cx="1013.20" cy="448.45" rx="1.00" ry="0.75" fill="#f0f0f0"/><ellipse cx="1040.30" cy="448.65" rx="1.10" ry="0.75" fill="#f2f2f2"/><ellipse cx="1040.20" cy="451.10" rx="0.60" ry="0.60" fill="#d01010"/><ellipse cx="1040.20" cy="454.10" rx="0.60" ry="0.60" fill="#10c010"/><ellipse cx="1040.20" cy="457.10" rx="0.60" ry="0.60" fill="#1010d0"/><ellipse cx="1040.20" cy="459.50" rx="0.60" ry="0.60" fill="#999"/><ellipse cx="1040.20" cy="462.10" rx="0.60" ry="0.60" fill="#f2f2f2"/><ellipse cx="1040.30" cy="473.95" rx="0.90" ry="0.75" fill="#f0f0f0"/><ellipse cx="1040.15" cy="476.95" rx="0.75" ry="0.75" fill="#c01010"/><ellipse cx="1040.15" cy="479.95" rx="0.75" ry="0.75" fill="#10b010"/><ellipse cx="1040.15" cy="482.95" rx="0.75" ry="0.75" fill="#1010c0"/><ellipse cx="1040.20" cy="494.75" rx="1.00" ry="0.75" fill="#f2f2f2"/><ellipse cx="1076.70" cy="448.15" rx="1.10" ry="0.75" fill="#f2f2f2"/><ellipse cx="1077.70" cy="447.78" rx="1.00" ry="0.75" fill="#f2f2f2"/><ellipse cx="1088.55" cy="447.68" rx="0.65" ry="0.65" fill="#ccc"/><ellipse cx="1013.20" cy="512.25" rx="1.00" ry="0.75" fill="#f0f0f0"/><ellipse cx="1040.30" cy="512.45" rx="1.10" ry="0.75" fill="#f2f2f2"/><ellipse cx="1040.20" cy="514.90" rx="0.60" ry="0.60" fill="#d01010"/><ellipse cx="1040.20" cy="517.90" rx="0.60" ry="0.60" fill="#10c010"/><ellipse cx="1040.20" cy="520.90" rx="0.60" ry="0.60" fill="#1010d0"/><ellipse cx="1040.20" cy="523.30" rx="0.60" ry="0.60" fill="#999"/><ellipse cx="1040.20" cy="525.90" rx="0.60" ry="0.60" fill="#f2f2f2"/><ellipse cx="1040.30" cy="537.75" rx="0.90" ry="0.75" fill="#f0f0f0"/><ellipse cx="1040.15" cy="540.75" rx="0.75" ry="0.75" fill="#c01010"/><ellipse cx="1040.15" cy="543.75" rx="0.75" ry="0.75" fill="#10b010"/><ellipse cx="1040.15" cy="546.75" rx="0.75" ry="0.75" fill="#1010c0"/><ellipse cx="1040.20" cy="558.55" rx="1.00" ry="0.75" fill="#f2f2f2"/><ellipse cx="1076.70" cy="511.95" rx="1.10" ry="0.75" fill="#f2f2f2"/><ellipse cx="1085.00" cy="511.58" rx="1.00" ry="0.75" fill="#f2f2f2"/><ellipse cx="1095.85" cy="511.48" rx="0.65" ry="0.65" fill="#ccc"/><ellipse cx="1013.20" cy="573.15" rx="1.00" ry="0.75" fill="#f0f0f0"/><ellipse cx="1040.30" cy="573.35" rx="1.10" ry="0.75" fill="#f2f2f2"/><ellipse cx="1040.20" cy="575.80" rx="0.60" ry="0.60" fill="#d01010"/><ellipse cx="1040.20" cy="578.80" rx="0.60" ry="0.60" fill="#10c010"/><ellipse cx="1040.20" cy="581.80" rx="0.60" ry="0.60" fill="#1010d0"/><ellipse cx="1040.20" cy="584.20" rx="0.60" ry="0.60" fill="#999"/><ellipse cx="1040.20" cy="586.80" rx="0.60" ry="0.60" fill="#f2f2f2"/><ellipse cx="1040.30" cy="598.65" rx="0.90" ry="0.75" fill="#f0f0f0"/><ellipse cx="1040.15" cy="601.65" rx="0.75" ry="0.75" fill="#c01010"/><ellipse cx="1040.15" cy="604.65" rx="0.75" ry="0.75" fill="#10b010"/><ellipse cx="1040.15" cy="607.65" rx="0.75" ry="0.75" fill="#1010c0"/><ellipse cx="1040.20" cy="619.45" rx="1.00" ry="0.75" fill="#f2f2f2"/><ellipse cx="1076.70" cy="572.85" rx="1.10" ry="0.75" fill="#f2f2f2"/><ellipse cx="1085.00" cy="572.48" rx="1.00" ry="0.75" fill="#f2f2f2"/><ellipse cx="1095.85" cy="572.38" rx="0.65" ry="0.65" fill="#ccc"/><ellipse cx="1246.70" cy="393.88" rx="1.00" ry="0.75" fill="#f2f2f2"/><ellipse cx="1238.70" cy="400.48" rx="1.00" ry="0.75" fill="#f2f2f2"/><ellipse cx="1252.80" cy="407.58" rx="1.00" ry="0.75" fill="#f2f2f2"/><ellipse cx="1269.60" cy="393.05" rx="1.10" ry="0.75" fill="#f2f2f2"/><ellipse cx="1279.90" cy="393.00" rx="1.00" ry="0.75" fill="#f2f2f2"/><ellipse cx="1290.75" cy="392.90" rx="0.65" ry="0.65" fill="#ccc"/><ellipse cx="1244.80" cy="421.38" rx="1.00" ry="0.75" fill="#f2f2f2"/><ellipse cx="1236.80" cy="428.38" rx="1.00" ry="0.75" fill="#f2f2f2"/><ellipse cx="1250.80" cy="434.48" rx="1.00" ry="0.75" fill="#f2f2f2"/><ellipse cx="1268.60" cy="421.15" rx="1.10" ry="0.75" fill="#f2f2f2"/><ellipse cx="1278.90" cy="421.10" rx="1.00" ry="0.75" fill="#f2f2f2"/><ellipse cx="1289.75" cy="421.00" rx="0.65" ry="0.65" fill="#ccc"/><ellipse cx="1247.80" cy="448.78" rx="1.00" ry="0.75" fill="#f2f2f2"/><ellipse cx="1239.80" cy="455.58" rx="1.00" ry="0.75" fill="#f2f2f2"/><ellipse cx="1250.80" cy="461.58" rx="1.00" ry="0.75" fill="#f2f2f2"/><ellipse cx="1268.60" cy="448.15" rx="1.10" ry="0.75" fill="#f2f2f2"/><ellipse cx="1278.90" cy="448.10" rx="1.00" ry="0.75" fill="#f2f2f2"/><ellipse cx="1289.75" cy="448.00" rx="0.65" ry="0.65" fill="#ccc"/><ellipse cx="1244.80" cy="477.38" rx="1.00" ry="0.75" fill="#f2f2f2"/><ellipse cx="1236.80" cy="484.48" rx="1.00" ry="0.75" fill="#f2f2f2"/><ellipse cx="1249.00" cy="490.68" rx="1.00" ry="0.75" fill="#f2f2f2"/><ellipse cx="1266.70" cy="476.85" rx="1.10" ry="0.75" fill="#f2f2f2"/><ellipse cx="1277.00" cy="476.80" rx="1.00" ry="0.75" fill="#f2f2f2"/><ellipse cx="1287.85" cy="476.70" rx="0.65" ry="0.65" fill="#ccc"/><ellipse cx="1244.80" cy="506.88" rx="1.00" ry="0.75" fill="#f2f2f2"/><ellipse cx="1236.80" cy="513.08" rx="1.00" ry="0.75" fill="#f2f2f2"/><ellipse cx="1249.00" cy="519.78" rx="1.00" ry="0.75" fill="#f2f2f2"/><ellipse cx="1266.70" cy="505.35" rx="1.10" ry="0.75" fill="#f2f2f2"/><ellipse cx="1277.00" cy="505.30" rx="1.00" ry="0.75" fill="#f2f2f2"/><ellipse cx="1287.85" cy="505.20" rx="0.65" ry="0.65" fill="#ccc"/><ellipse cx="1242.80" cy="535.58" rx="1.00" ry="0.75" fill="#f2f2f2"/><ellipse cx="1234.80" cy="541.58" rx="1.00" ry="0.75" fill="#f2f2f2"/><ellipse cx="1249.00" cy="548.58" rx="1.00" ry="0.75" fill="#f2f2f2"/><ellipse cx="1266.70" cy="533.95" rx="1.10" ry="0.75" fill="#f2f2f2"/><ellipse cx="1277.00" cy="533.90" rx="1.00" ry="0.75" fill="#f2f2f2"/><ellipse cx="1287.85" cy="533.80" rx="0.65" ry="0.65" fill="#ccc"/><ellipse cx="1239.80" cy="562.58" rx="1.00" ry="0.75" fill="#f2f2f2"/><ellipse cx="1231.80" cy="569.18" rx="1.00" ry="0.75" fill="#f2f2f2"/><ellipse cx="1249.00" cy="575.78" rx="1.00" ry="0.75" fill="#f2f2f2"/><ellipse cx="1266.70" cy="561.35" rx="1.10" ry="0.75" fill="#f2f2f2"/><ellipse cx="1277.00" cy="561.30" rx="1.00" ry="0.75" fill="#f2f2f2"/><ellipse cx="1287.85" cy="561.20" rx="0.65" ry="0.65" fill="#ccc"/><ellipse cx="1244.80" cy="591.58" rx="1.00" ry="0.75" fill="#f2f2f2"/><ellipse cx="1236.80" cy="597.58" rx="1.00" ry="0.75" fill="#f2f2f2"/><ellipse cx="1249.00" cy="604.28" rx="1.00" ry="0.75" fill="#f2f2f2"/><ellipse cx="1266.70" cy="590.05" rx="1.10" ry="0.75" fill="#f2f2f2"/><ellipse cx="1277.00" cy="590.00" rx="1.00" ry="0.75" fill="#f2f2f2"/><ellipse cx="1287.85" cy="589.90" rx="0.65" ry="0.65" fill="#ccc"/><ellipse cx="1247.80" cy="620.48" rx="1.00" ry="0.75" fill="#f2f2f2"/><ellipse cx="1239.80" cy="626.58" rx="1.00" ry="0.75" fill="#f2f2f2"/><ellipse cx="1249.00" cy="633.38" rx="1.00" ry="0.75" fill="#f2f2f2"/><ellipse cx="1266.70" cy="618.95" rx="1.10" ry="0.75" fill="#f2f2f2"/><ellipse cx="1277.00" cy="618.90" rx="1.00" ry="0.75" fill="#f2f2f2"/><ellipse cx="1287.85" cy="618.80" rx="0.65" ry="0.65" fill="#ccc"/><ellipse cx="1388.50" cy="457.85" rx="1.00" ry="0.65" fill="#f0f0f0"/><ellipse cx="1388.50" cy="464.39" rx="1.00" ry="0.65" fill="#f0f0f0"/><ellipse cx="1388.50" cy="470.93" rx="1.00" ry="0.65" fill="#f0f0f0"/><ellipse cx="1388.50" cy="477.47" rx="1.00" ry="0.65" fill="#f0f0f0"/><ellipse cx="1388.50" cy="484.01" rx="1.00" ry="0.65" fill="#f0f0f0"/><ellipse cx="1388.50" cy="490.55" rx="1.00" ry="0.65" fill="#f0f0f0"/><ellipse cx="1388.50" cy="497.09" rx="1.00" ry="0.65" fill="#f0f0f0"/><ellipse cx="1388.50" cy="503.63" rx="1.00" ry="0.65" fill="#f0f0f0"/><ellipse cx="1388.50" cy="510.17" rx="1.00" ry="0.65" fill="#f0f0f0"/><ellipse cx="1455.40" cy="491.75" rx="1.00" ry="0.65" fill="#f0f0f0"/><ellipse cx="1455.40" cy="498.19" rx="1.00" ry="0.65" fill="#f0f0f0"/><ellipse cx="1455.40" cy="504.63" rx="1.00" ry="0.65" fill="#f0f0f0"/><ellipse cx="1455.40" cy="511.07" rx="1.00" ry="0.65" fill="#f0f0f0"/><ellipse cx="1455.40" cy="517.51" rx="1.00" ry="0.65" fill="#f0f0f0"/><ellipse cx="1455.40" cy="523.95" rx="1.00" ry="0.65" fill="#f0f0f0"/><ellipse cx="1455.40" cy="530.39" rx="1.00" ry="0.65" fill="#f0f0f0"/><ellipse cx="1455.40" cy="536.83" rx="1.00" ry="0.65" fill="#f0f0f0"/><ellipse cx="1455.40" cy="543.27" rx="1.00" ry="0.65" fill="#f0f0f0"/><ellipse cx="1409.50" cy="476.50" rx="0.60" ry="0.60" fill="#f0f0f0"/><ellipse cx="1409.50" cy="479.70" rx="0.60" ry="0.60" fill="#f0f0f0"/><ellipse cx="1409.50" cy="482.90" rx="0.60" ry="0.60" fill="#f0f0f0"/><ellipse cx="1409.50" cy="486.10" rx="0.60" ry="0.60" fill="#f0f0f0"/><ellipse cx="1409.50" cy="489.30" rx="0.60" ry="0.60" fill="#f0f0f0"/><ellipse cx="1409.50" cy="492.50" rx="0.60" ry="0.60" fill="#f0f0f0"/><ellipse cx="1409.50" cy="495.70" rx="0.60" ry="0.60" fill="#f0f0f0"/><ellipse cx="1409.50" cy="498.90" rx="0.60" ry="0.60" fill="#f0f0f0"/><ellipse cx="1420.90" cy="476.15" rx="1.00" ry="0.75" fill="#f0f0f0"/><ellipse cx="1481.60" cy="503.60" rx="0.60" ry="0.60" fill="#f0f0f0"/><ellipse cx="1481.60" cy="506.30" rx="0.60" ry="0.60" fill="#f0f0f0"/><ellipse cx="1481.60" cy="509.00" rx="0.60" ry="0.60" fill="#f0f0f0"/><ellipse cx="1481.60" cy="511.70" rx="0.60" ry="0.60" fill="#f0f0f0"/><ellipse cx="1481.60" cy="514.40" rx="0.60" ry="0.60" fill="#f0f0f0"/><ellipse cx="1481.60" cy="517.10" rx="0.60" ry="0.60" fill="#f0f0f0"/><ellipse cx="1481.60" cy="519.80" rx="0.60" ry="0.60" fill="#f0f0f0"/><ellipse cx="1481.60" cy="522.50" rx="0.60" ry="0.60" fill="#f0f0f0"/><ellipse cx="1481.60" cy="525.20" rx="0.60" ry="0.60" fill="#f0f0f0"/><ellipse cx="1493.00" cy="503.75" rx="1.00" ry="0.75" fill="#f0f0f0"/><ellipse cx="1513.50" cy="476.40" rx="0.50" ry="0.50" fill="#f0f0f0"/><ellipse cx="1513.50" cy="479.90" rx="0.50" ry="0.50" fill="#f0f0f0"/><ellipse cx="1513.50" cy="483.40" rx="0.50" ry="0.50" fill="#f0f0f0"/><ellipse cx="1513.50" cy="486.90" rx="0.50" ry="0.50" fill="#f0f0f0"/><ellipse cx="1513.50" cy="490.40" rx="0.50" ry="0.50" fill="#f0f0f0"/><ellipse cx="1513.50" cy="493.90" rx="0.50" ry="0.50" fill="#f0f0f0"/><ellipse cx="1513.50" cy="497.40" rx="0.50" ry="0.50" fill="#f0f0f0"/><ellipse cx="1513.50" cy="500.90" rx="0.50" ry="0.50" fill="#f0f0f0"/><ellipse cx="1513.50" cy="504.40" rx="0.50" ry="0.50" fill="#f0f0f0"/><ellipse cx="1513.50" cy="507.90" rx="0.50" ry="0.50" fill="#f0f0f0"/><ellipse cx="1513.50" cy="511.40" rx="0.50" ry="0.50" fill="#f0f0f0"/><ellipse cx="1513.50" cy="514.90" rx="0.50" ry="0.50" fill="#f0f0f0"/><ellipse cx="1513.50" cy="518.40" rx="0.50" ry="0.50" fill="#f0f0f0"/><ellipse cx="1513.50" cy="521.90" rx="0.50" ry="0.50" fill="#f0f0f0"/><ellipse cx="1513.50" cy="525.40" rx="0.50" ry="0.50" fill="#f0f0f0"/><ellipse cx="1513.50" cy="528.90" rx="0.50" ry="0.50" fill="#f0f0f0"/></svg>
</body></html>
